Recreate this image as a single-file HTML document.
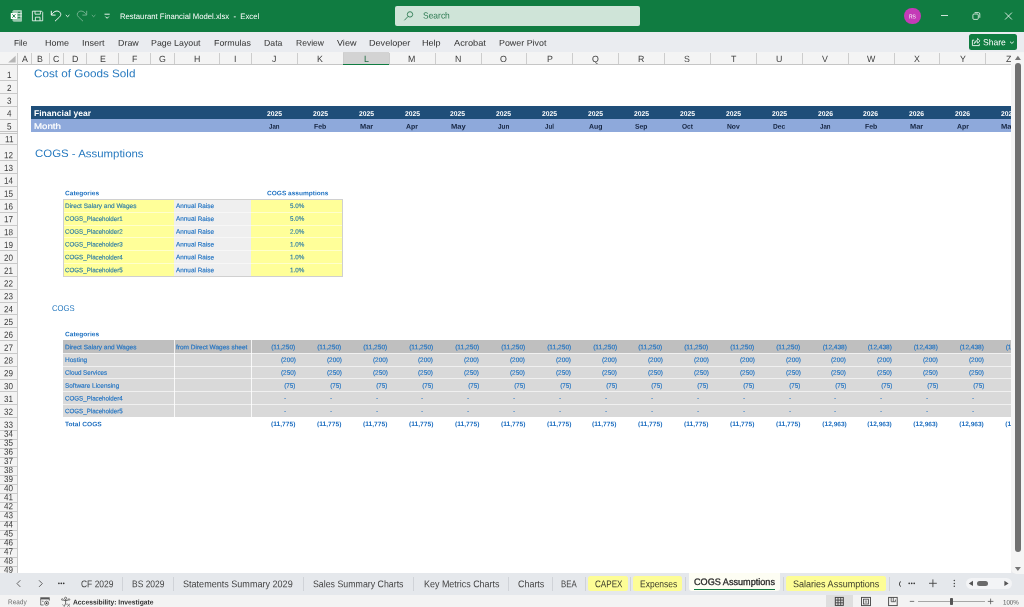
<!DOCTYPE html>
<html><head><meta charset="utf-8"><title>Restaurant Financial Model.xlsx - Excel</title>
<style>
html,body{margin:0;padding:0}
body{width:1024px;height:607px;position:relative;overflow:hidden;background:#fff;font-family:"Liberation Sans",sans-serif}
#r{position:absolute;left:0;top:0;width:1024px;height:607px;overflow:hidden;will-change:transform}
#r div{position:absolute}
#r svg{position:absolute;overflow:visible}
.t{position:absolute;white-space:pre;line-height:1;display:block}
</style></head><body><div id="r">
<div style="left:0.00px;top:0.00px;width:1024.00px;height:32.00px;background:#107c41;"></div>
<div style="left:395.00px;top:5.70px;width:244.90px;height:20.50px;background:#cfe4d8;border-radius:2px;"></div>
<span class="t" style="top:10px;line-height:10px;font-size:8.9px;color:#2d7a52;left:422.70px;transform-origin:0 50%;transform:translateY(0.60px) skewY(0.05deg) scaleX(0.9540);">Search</span>
<span class="t" style="top:12px;line-height:9px;font-size:7.9px;color:#ffffff;left:120.30px;transform-origin:0 50%;transform:translateY(0.00px) skewY(0.05deg) scaleX(0.9763);">Restaurant Financial Model.xlsx  -  Excel</span>
<div style="left:904.4px;top:7.9px;width:16.2px;height:16.2px;border-radius:50%;background:#c43bb7"></div>
<span class="t" style="top:13px;line-height:6px;font-size:5.8px;color:#ffffff;left:909.10px;transform-origin:0 50%;transform:translateY(0.50px) skewY(0.05deg) scaleX(0.8563);">RS</span>
<div style="left:0.00px;top:32.00px;width:1024.00px;height:20.00px;background:#eaecf0;"></div>
<span class="t" style="top:37px;line-height:10px;font-size:8.4px;color:#303030;left:14.00px;transform-origin:0 50%;transform:translateY(0.75px) skewY(0.05deg) scaleX(0.9827);">File</span>
<span class="t" style="top:37px;line-height:10px;font-size:8.4px;color:#303030;left:45.00px;transform-origin:0 50%;transform:translateY(0.75px) skewY(0.05deg) scaleX(1.0712);">Home</span>
<span class="t" style="top:37px;line-height:10px;font-size:8.4px;color:#303030;left:82.30px;transform-origin:0 50%;transform:translateY(0.75px) skewY(0.05deg) scaleX(1.0806);">Insert</span>
<span class="t" style="top:37px;line-height:10px;font-size:8.4px;color:#303030;left:117.50px;transform-origin:0 50%;transform:translateY(0.75px) skewY(0.05deg) scaleX(1.0612);">Draw</span>
<span class="t" style="top:37px;line-height:10px;font-size:8.4px;color:#303030;left:151.30px;transform-origin:0 50%;transform:translateY(0.75px) skewY(0.05deg) scaleX(1.0537);">Page Layout</span>
<span class="t" style="top:37px;line-height:10px;font-size:8.4px;color:#303030;left:214.00px;transform-origin:0 50%;transform:translateY(0.75px) skewY(0.05deg) scaleX(1.0570);">Formulas</span>
<span class="t" style="top:37px;line-height:10px;font-size:8.4px;color:#303030;left:263.50px;transform-origin:0 50%;transform:translateY(0.75px) skewY(0.05deg) scaleX(1.0427);">Data</span>
<span class="t" style="top:37px;line-height:10px;font-size:8.4px;color:#303030;left:295.50px;transform-origin:0 50%;transform:translateY(0.75px) skewY(0.05deg) scaleX(1.0166);">Review</span>
<span class="t" style="top:37px;line-height:10px;font-size:8.4px;color:#303030;left:336.50px;transform-origin:0 50%;transform:translateY(0.75px) skewY(0.05deg) scaleX(1.0800);">View</span>
<span class="t" style="top:37px;line-height:10px;font-size:8.4px;color:#303030;left:368.50px;transform-origin:0 50%;transform:translateY(0.75px) skewY(0.05deg) scaleX(1.0840);">Developer</span>
<span class="t" style="top:37px;line-height:10px;font-size:8.4px;color:#303030;left:422.30px;transform-origin:0 50%;transform:translateY(0.75px) skewY(0.05deg) scaleX(1.0825);">Help</span>
<span class="t" style="top:37px;line-height:10px;font-size:8.4px;color:#303030;left:454.00px;transform-origin:0 50%;transform:translateY(0.75px) skewY(0.05deg) scaleX(1.1055);">Acrobat</span>
<span class="t" style="top:37px;line-height:10px;font-size:8.4px;color:#303030;left:499.00px;transform-origin:0 50%;transform:translateY(0.75px) skewY(0.05deg) scaleX(1.0599);">Power Pivot</span>
<div style="left:969.00px;top:34.00px;width:47.80px;height:16.00px;background:#107c41;border-radius:2.5px;"></div>
<span class="t" style="top:37px;line-height:10px;font-size:8.8px;color:#ffffff;left:983.00px;transform-origin:0 50%;transform:translateY(0.20px) skewY(0.05deg) scaleX(0.9753);">Share</span>
<div style="left:0.00px;top:51.90px;width:1024.00px;height:12.70px;background:#f4f4f4;"></div>
<div style="left:0.00px;top:64.00px;width:1010.90px;height:0.80px;background:#c6c6c6;"></div>
<div style="left:343.23px;top:52.40px;width:45.89px;height:11.60px;background:#d3d3d3;"></div>
<div style="left:343.23px;top:63.60px;width:45.89px;height:1.40px;background:#107c41;"></div>
<div style="left:31.10px;top:52.60px;width:0.80px;height:11.60px;background:#cdcdcd;"></div>
<span class="t" style="top:53px;line-height:10px;font-size:9.0px;color:#3d3d3d;left:21.56px;transform-origin:0 50%;transform:translateY(0.90px) skewY(0.05deg) scaleX(0.9800);">A</span>
<div style="left:48.70px;top:52.60px;width:0.80px;height:11.60px;background:#cdcdcd;"></div>
<span class="t" style="top:53px;line-height:10px;font-size:9.0px;color:#3d3d3d;left:37.36px;transform-origin:0 50%;transform:translateY(0.90px) skewY(0.05deg) scaleX(0.9800);">B</span>
<div style="left:63.00px;top:52.60px;width:0.80px;height:11.60px;background:#cdcdcd;"></div>
<span class="t" style="top:53px;line-height:10px;font-size:9.0px;color:#3d3d3d;left:53.07px;transform-origin:0 50%;transform:translateY(0.90px) skewY(0.05deg) scaleX(0.9800);">C</span>
<div style="left:86.00px;top:52.60px;width:0.80px;height:11.60px;background:#cdcdcd;"></div>
<span class="t" style="top:53px;line-height:10px;font-size:9.0px;color:#3d3d3d;left:71.72px;transform-origin:0 50%;transform:translateY(0.90px) skewY(0.05deg) scaleX(0.9800);">D</span>
<div style="left:118.30px;top:52.60px;width:0.80px;height:11.60px;background:#cdcdcd;"></div>
<span class="t" style="top:53px;line-height:10px;font-size:9.0px;color:#3d3d3d;left:99.61px;transform-origin:0 50%;transform:translateY(0.90px) skewY(0.05deg) scaleX(0.9800);">E</span>
<div style="left:150.10px;top:52.60px;width:0.80px;height:11.60px;background:#cdcdcd;"></div>
<span class="t" style="top:53px;line-height:10px;font-size:9.0px;color:#3d3d3d;left:131.91px;transform-origin:0 50%;transform:translateY(0.90px) skewY(0.05deg) scaleX(0.9800);">F</span>
<div style="left:174.00px;top:52.60px;width:0.80px;height:11.60px;background:#cdcdcd;"></div>
<span class="t" style="top:53px;line-height:10px;font-size:9.0px;color:#3d3d3d;left:159.02px;transform-origin:0 50%;transform:translateY(0.90px) skewY(0.05deg) scaleX(0.9800);">G</span>
<div style="left:219.00px;top:52.60px;width:0.80px;height:11.60px;background:#cdcdcd;"></div>
<span class="t" style="top:53px;line-height:10px;font-size:9.0px;color:#3d3d3d;left:193.72px;transform-origin:0 50%;transform:translateY(0.90px) skewY(0.05deg) scaleX(0.9800);">H</span>
<div style="left:251.10px;top:52.60px;width:0.80px;height:11.60px;background:#cdcdcd;"></div>
<span class="t" style="top:53px;line-height:10px;font-size:9.0px;color:#3d3d3d;left:234.22px;transform-origin:0 50%;transform:translateY(0.90px) skewY(0.05deg) scaleX(0.9800);">I</span>
<div style="left:296.94px;top:52.60px;width:0.80px;height:11.60px;background:#cdcdcd;"></div>
<span class="t" style="top:53px;line-height:10px;font-size:9.0px;color:#3d3d3d;left:272.19px;transform-origin:0 50%;transform:translateY(0.90px) skewY(0.05deg) scaleX(0.9800);">J</span>
<div style="left:342.83px;top:52.60px;width:0.80px;height:11.60px;background:#cdcdcd;"></div>
<span class="t" style="top:53px;line-height:10px;font-size:9.0px;color:#3d3d3d;left:317.34px;transform-origin:0 50%;transform:translateY(0.90px) skewY(0.05deg) scaleX(0.9800);">K</span>
<div style="left:388.72px;top:52.60px;width:0.80px;height:11.60px;background:#cdcdcd;"></div>
<span class="t" style="top:53px;line-height:10px;font-size:9.0px;color:#1e6b41;left:363.72px;transform-origin:0 50%;transform:translateY(0.90px) skewY(0.05deg) scaleX(0.9800);">L</span>
<div style="left:434.61px;top:52.60px;width:0.80px;height:11.60px;background:#cdcdcd;"></div>
<span class="t" style="top:53px;line-height:10px;font-size:9.0px;color:#3d3d3d;left:408.39px;transform-origin:0 50%;transform:translateY(0.90px) skewY(0.05deg) scaleX(0.9800);">M</span>
<div style="left:480.50px;top:52.60px;width:0.80px;height:11.60px;background:#cdcdcd;"></div>
<span class="t" style="top:53px;line-height:10px;font-size:9.0px;color:#3d3d3d;left:454.77px;transform-origin:0 50%;transform:translateY(0.90px) skewY(0.05deg) scaleX(0.9800);">N</span>
<div style="left:526.39px;top:52.60px;width:0.80px;height:11.60px;background:#cdcdcd;"></div>
<span class="t" style="top:53px;line-height:10px;font-size:9.0px;color:#3d3d3d;left:500.41px;transform-origin:0 50%;transform:translateY(0.90px) skewY(0.05deg) scaleX(0.9800);">O</span>
<div style="left:572.28px;top:52.60px;width:0.80px;height:11.60px;background:#cdcdcd;"></div>
<span class="t" style="top:53px;line-height:10px;font-size:9.0px;color:#3d3d3d;left:546.79px;transform-origin:0 50%;transform:translateY(0.90px) skewY(0.05deg) scaleX(0.9800);">P</span>
<div style="left:618.17px;top:52.60px;width:0.80px;height:11.60px;background:#cdcdcd;"></div>
<span class="t" style="top:53px;line-height:10px;font-size:9.0px;color:#3d3d3d;left:592.19px;transform-origin:0 50%;transform:translateY(0.90px) skewY(0.05deg) scaleX(0.9800);">Q</span>
<div style="left:664.06px;top:52.60px;width:0.80px;height:11.60px;background:#cdcdcd;"></div>
<span class="t" style="top:53px;line-height:10px;font-size:9.0px;color:#3d3d3d;left:638.33px;transform-origin:0 50%;transform:translateY(0.90px) skewY(0.05deg) scaleX(0.9800);">R</span>
<div style="left:709.95px;top:52.60px;width:0.80px;height:11.60px;background:#cdcdcd;"></div>
<span class="t" style="top:53px;line-height:10px;font-size:9.0px;color:#3d3d3d;left:684.46px;transform-origin:0 50%;transform:translateY(0.90px) skewY(0.05deg) scaleX(0.9800);">S</span>
<div style="left:755.84px;top:52.60px;width:0.80px;height:11.60px;background:#cdcdcd;"></div>
<span class="t" style="top:53px;line-height:10px;font-size:9.0px;color:#3d3d3d;left:730.60px;transform-origin:0 50%;transform:translateY(0.90px) skewY(0.05deg) scaleX(0.9800);">T</span>
<div style="left:801.73px;top:52.60px;width:0.80px;height:11.60px;background:#cdcdcd;"></div>
<span class="t" style="top:53px;line-height:10px;font-size:9.0px;color:#3d3d3d;left:776.00px;transform-origin:0 50%;transform:translateY(0.90px) skewY(0.05deg) scaleX(0.9800);">U</span>
<div style="left:847.62px;top:52.60px;width:0.80px;height:11.60px;background:#cdcdcd;"></div>
<span class="t" style="top:53px;line-height:10px;font-size:9.0px;color:#3d3d3d;left:822.13px;transform-origin:0 50%;transform:translateY(0.90px) skewY(0.05deg) scaleX(0.9800);">V</span>
<div style="left:893.51px;top:52.60px;width:0.80px;height:11.60px;background:#cdcdcd;"></div>
<span class="t" style="top:53px;line-height:10px;font-size:9.0px;color:#3d3d3d;left:866.80px;transform-origin:0 50%;transform:translateY(0.90px) skewY(0.05deg) scaleX(0.9800);">W</span>
<div style="left:939.40px;top:52.60px;width:0.80px;height:11.60px;background:#cdcdcd;"></div>
<span class="t" style="top:53px;line-height:10px;font-size:9.0px;color:#3d3d3d;left:913.91px;transform-origin:0 50%;transform:translateY(0.90px) skewY(0.05deg) scaleX(0.9800);">X</span>
<div style="left:985.29px;top:52.60px;width:0.80px;height:11.60px;background:#cdcdcd;"></div>
<span class="t" style="top:53px;line-height:10px;font-size:9.0px;color:#3d3d3d;left:959.80px;transform-origin:0 50%;transform:translateY(0.90px) skewY(0.05deg) scaleX(0.9800);">Y</span>
<span class="t" style="top:53px;line-height:10px;font-size:9.0px;color:#3d3d3d;left:1005.51px;transform-origin:0 50%;transform:translateY(0.90px) skewY(0.05deg) scaleX(0.9800);">Z</span>
<div style="left:17.10px;top:52.60px;width:0.80px;height:11.60px;background:#cdcdcd;"></div>
<svg style="left:0;top:52px" width="18" height="13" viewBox="0 0 18 13"><path d="M15.6 3.8 L15.6 10.6 L8.2 10.6 Z" fill="#b5b5b5"/></svg>
<div style="left:0.00px;top:64.80px;width:17.50px;height:508.00px;background:#f3f3f3;"></div>
<div style="left:17.10px;top:64.80px;width:0.80px;height:508.00px;background:#c9c9c9;"></div>
<div style="left:0.00px;top:80.26px;width:17.50px;height:0.80px;background:#c9c9c9;"></div>
<span class="t" style="top:70px;line-height:10px;font-size:9.0px;color:#3a3a3a;left:6.60px;transform-origin:0 50%;transform:translateY(0.06px) skewY(0.05deg) scaleX(0.9000);">1</span>
<div style="left:0.00px;top:93.09px;width:17.50px;height:0.80px;background:#c9c9c9;"></div>
<span class="t" style="top:82px;line-height:10px;font-size:9.0px;color:#3a3a3a;left:6.60px;transform-origin:0 50%;transform:translateY(0.89px) skewY(0.05deg) scaleX(0.9000);">2</span>
<div style="left:0.00px;top:105.92px;width:17.50px;height:0.80px;background:#c9c9c9;"></div>
<span class="t" style="top:95px;line-height:10px;font-size:9.0px;color:#3a3a3a;left:6.60px;transform-origin:0 50%;transform:translateY(0.72px) skewY(0.05deg) scaleX(0.9000);">3</span>
<div style="left:0.00px;top:118.75px;width:17.50px;height:0.80px;background:#c9c9c9;"></div>
<span class="t" style="top:108px;line-height:10px;font-size:9.0px;color:#3a3a3a;left:6.60px;transform-origin:0 50%;transform:translateY(0.55px) skewY(0.05deg) scaleX(0.9000);">4</span>
<span class="t" style="top:121px;line-height:10px;font-size:9.0px;color:#3a3a3a;left:6.60px;transform-origin:0 50%;transform:translateY(0.38px) skewY(0.05deg) scaleX(0.9000);">5</span>
<div style="left:0.00px;top:144.41px;width:17.50px;height:0.80px;background:#c9c9c9;"></div>
<span class="t" style="top:134px;line-height:10px;font-size:9.0px;color:#3a3a3a;left:4.65px;transform-origin:0 50%;transform:translateY(0.21px) skewY(0.05deg) scaleX(0.9000);">11</span>
<div style="left:0.00px;top:160.41px;width:17.50px;height:0.80px;background:#c9c9c9;"></div>
<span class="t" style="top:150px;line-height:10px;font-size:9.0px;color:#3a3a3a;left:4.35px;transform-origin:0 50%;transform:translateY(0.21px) skewY(0.05deg) scaleX(0.9000);">12</span>
<div style="left:0.00px;top:173.24px;width:17.50px;height:0.80px;background:#c9c9c9;"></div>
<span class="t" style="top:163px;line-height:10px;font-size:9.0px;color:#3a3a3a;left:4.35px;transform-origin:0 50%;transform:translateY(0.04px) skewY(0.05deg) scaleX(0.9000);">13</span>
<div style="left:0.00px;top:186.07px;width:17.50px;height:0.80px;background:#c9c9c9;"></div>
<span class="t" style="top:175px;line-height:10px;font-size:9.0px;color:#3a3a3a;left:4.35px;transform-origin:0 50%;transform:translateY(0.87px) skewY(0.05deg) scaleX(0.9000);">14</span>
<div style="left:0.00px;top:198.90px;width:17.50px;height:0.80px;background:#c9c9c9;"></div>
<span class="t" style="top:188px;line-height:10px;font-size:9.0px;color:#3a3a3a;left:4.35px;transform-origin:0 50%;transform:translateY(0.70px) skewY(0.05deg) scaleX(0.9000);">15</span>
<div style="left:0.00px;top:211.73px;width:17.50px;height:0.80px;background:#c9c9c9;"></div>
<span class="t" style="top:201px;line-height:10px;font-size:9.0px;color:#3a3a3a;left:4.35px;transform-origin:0 50%;transform:translateY(0.53px) skewY(0.05deg) scaleX(0.9000);">16</span>
<div style="left:0.00px;top:224.56px;width:17.50px;height:0.80px;background:#c9c9c9;"></div>
<span class="t" style="top:214px;line-height:10px;font-size:9.0px;color:#3a3a3a;left:4.35px;transform-origin:0 50%;transform:translateY(0.36px) skewY(0.05deg) scaleX(0.9000);">17</span>
<div style="left:0.00px;top:237.39px;width:17.50px;height:0.80px;background:#c9c9c9;"></div>
<span class="t" style="top:227px;line-height:10px;font-size:9.0px;color:#3a3a3a;left:4.35px;transform-origin:0 50%;transform:translateY(0.19px) skewY(0.05deg) scaleX(0.9000);">18</span>
<div style="left:0.00px;top:250.22px;width:17.50px;height:0.80px;background:#c9c9c9;"></div>
<span class="t" style="top:240px;line-height:10px;font-size:9.0px;color:#3a3a3a;left:4.35px;transform-origin:0 50%;transform:translateY(0.02px) skewY(0.05deg) scaleX(0.9000);">19</span>
<div style="left:0.00px;top:263.05px;width:17.50px;height:0.80px;background:#c9c9c9;"></div>
<span class="t" style="top:252px;line-height:10px;font-size:9.0px;color:#3a3a3a;left:4.35px;transform-origin:0 50%;transform:translateY(0.85px) skewY(0.05deg) scaleX(0.9000);">20</span>
<div style="left:0.00px;top:275.88px;width:17.50px;height:0.80px;background:#c9c9c9;"></div>
<span class="t" style="top:265px;line-height:10px;font-size:9.0px;color:#3a3a3a;left:4.35px;transform-origin:0 50%;transform:translateY(0.68px) skewY(0.05deg) scaleX(0.9000);">21</span>
<div style="left:0.00px;top:288.71px;width:17.50px;height:0.80px;background:#c9c9c9;"></div>
<span class="t" style="top:278px;line-height:10px;font-size:9.0px;color:#3a3a3a;left:4.35px;transform-origin:0 50%;transform:translateY(0.51px) skewY(0.05deg) scaleX(0.9000);">22</span>
<div style="left:0.00px;top:301.54px;width:17.50px;height:0.80px;background:#c9c9c9;"></div>
<span class="t" style="top:291px;line-height:10px;font-size:9.0px;color:#3a3a3a;left:4.35px;transform-origin:0 50%;transform:translateY(0.34px) skewY(0.05deg) scaleX(0.9000);">23</span>
<div style="left:0.00px;top:314.37px;width:17.50px;height:0.80px;background:#c9c9c9;"></div>
<span class="t" style="top:304px;line-height:10px;font-size:9.0px;color:#3a3a3a;left:4.35px;transform-origin:0 50%;transform:translateY(0.17px) skewY(0.05deg) scaleX(0.9000);">24</span>
<div style="left:0.00px;top:327.20px;width:17.50px;height:0.80px;background:#c9c9c9;"></div>
<span class="t" style="top:317px;line-height:10px;font-size:9.0px;color:#3a3a3a;left:4.35px;transform-origin:0 50%;transform:translateY(0.00px) skewY(0.05deg) scaleX(0.9000);">25</span>
<div style="left:0.00px;top:340.03px;width:17.50px;height:0.80px;background:#c9c9c9;"></div>
<span class="t" style="top:329px;line-height:10px;font-size:9.0px;color:#3a3a3a;left:4.35px;transform-origin:0 50%;transform:translateY(0.83px) skewY(0.05deg) scaleX(0.9000);">26</span>
<div style="left:0.00px;top:352.86px;width:17.50px;height:0.80px;background:#c9c9c9;"></div>
<span class="t" style="top:342px;line-height:10px;font-size:9.0px;color:#3a3a3a;left:4.35px;transform-origin:0 50%;transform:translateY(0.66px) skewY(0.05deg) scaleX(0.9000);">27</span>
<div style="left:0.00px;top:365.69px;width:17.50px;height:0.80px;background:#c9c9c9;"></div>
<span class="t" style="top:355px;line-height:10px;font-size:9.0px;color:#3a3a3a;left:4.35px;transform-origin:0 50%;transform:translateY(0.49px) skewY(0.05deg) scaleX(0.9000);">28</span>
<div style="left:0.00px;top:378.52px;width:17.50px;height:0.80px;background:#c9c9c9;"></div>
<span class="t" style="top:368px;line-height:10px;font-size:9.0px;color:#3a3a3a;left:4.35px;transform-origin:0 50%;transform:translateY(0.32px) skewY(0.05deg) scaleX(0.9000);">29</span>
<div style="left:0.00px;top:391.35px;width:17.50px;height:0.80px;background:#c9c9c9;"></div>
<span class="t" style="top:381px;line-height:10px;font-size:9.0px;color:#3a3a3a;left:4.35px;transform-origin:0 50%;transform:translateY(0.15px) skewY(0.05deg) scaleX(0.9000);">30</span>
<div style="left:0.00px;top:404.18px;width:17.50px;height:0.80px;background:#c9c9c9;"></div>
<span class="t" style="top:393px;line-height:10px;font-size:9.0px;color:#3a3a3a;left:4.35px;transform-origin:0 50%;transform:translateY(0.98px) skewY(0.05deg) scaleX(0.9000);">31</span>
<div style="left:0.00px;top:417.01px;width:17.50px;height:0.80px;background:#c9c9c9;"></div>
<span class="t" style="top:406px;line-height:10px;font-size:9.0px;color:#3a3a3a;left:4.35px;transform-origin:0 50%;transform:translateY(0.81px) skewY(0.05deg) scaleX(0.9000);">32</span>
<div style="left:0.00px;top:429.84px;width:17.50px;height:0.80px;background:#c9c9c9;"></div>
<span class="t" style="top:419px;line-height:10px;font-size:9.0px;color:#3a3a3a;left:4.35px;transform-origin:0 50%;transform:translateY(0.64px) skewY(0.05deg) scaleX(0.9000);">33</span>
<div style="left:0.00px;top:438.91px;width:17.50px;height:0.80px;background:#c9c9c9;"></div>
<span class="t" style="top:428px;line-height:10px;font-size:9.0px;color:#3a3a3a;left:4.35px;transform-origin:0 50%;transform:translateY(0.71px) skewY(0.05deg) scaleX(0.9000);">34</span>
<div style="left:0.00px;top:447.98px;width:17.50px;height:0.80px;background:#c9c9c9;"></div>
<span class="t" style="top:437px;line-height:10px;font-size:9.0px;color:#3a3a3a;left:4.35px;transform-origin:0 50%;transform:translateY(0.78px) skewY(0.05deg) scaleX(0.9000);">35</span>
<div style="left:0.00px;top:457.05px;width:17.50px;height:0.80px;background:#c9c9c9;"></div>
<span class="t" style="top:446px;line-height:10px;font-size:9.0px;color:#3a3a3a;left:4.35px;transform-origin:0 50%;transform:translateY(0.85px) skewY(0.05deg) scaleX(0.9000);">36</span>
<div style="left:0.00px;top:466.12px;width:17.50px;height:0.80px;background:#c9c9c9;"></div>
<span class="t" style="top:455px;line-height:10px;font-size:9.0px;color:#3a3a3a;left:4.35px;transform-origin:0 50%;transform:translateY(0.92px) skewY(0.05deg) scaleX(0.9000);">37</span>
<div style="left:0.00px;top:475.19px;width:17.50px;height:0.80px;background:#c9c9c9;"></div>
<span class="t" style="top:464px;line-height:10px;font-size:9.0px;color:#3a3a3a;left:4.35px;transform-origin:0 50%;transform:translateY(0.99px) skewY(0.05deg) scaleX(0.9000);">38</span>
<div style="left:0.00px;top:484.26px;width:17.50px;height:0.80px;background:#c9c9c9;"></div>
<span class="t" style="top:474px;line-height:10px;font-size:9.0px;color:#3a3a3a;left:4.35px;transform-origin:0 50%;transform:translateY(0.06px) skewY(0.05deg) scaleX(0.9000);">39</span>
<div style="left:0.00px;top:493.33px;width:17.50px;height:0.80px;background:#c9c9c9;"></div>
<span class="t" style="top:483px;line-height:10px;font-size:9.0px;color:#3a3a3a;left:4.35px;transform-origin:0 50%;transform:translateY(0.13px) skewY(0.05deg) scaleX(0.9000);">40</span>
<div style="left:0.00px;top:502.40px;width:17.50px;height:0.80px;background:#c9c9c9;"></div>
<span class="t" style="top:492px;line-height:10px;font-size:9.0px;color:#3a3a3a;left:4.35px;transform-origin:0 50%;transform:translateY(0.20px) skewY(0.05deg) scaleX(0.9000);">41</span>
<div style="left:0.00px;top:511.47px;width:17.50px;height:0.80px;background:#c9c9c9;"></div>
<span class="t" style="top:501px;line-height:10px;font-size:9.0px;color:#3a3a3a;left:4.35px;transform-origin:0 50%;transform:translateY(0.27px) skewY(0.05deg) scaleX(0.9000);">42</span>
<div style="left:0.00px;top:520.54px;width:17.50px;height:0.80px;background:#c9c9c9;"></div>
<span class="t" style="top:510px;line-height:10px;font-size:9.0px;color:#3a3a3a;left:4.35px;transform-origin:0 50%;transform:translateY(0.34px) skewY(0.05deg) scaleX(0.9000);">43</span>
<div style="left:0.00px;top:529.61px;width:17.50px;height:0.80px;background:#c9c9c9;"></div>
<span class="t" style="top:519px;line-height:10px;font-size:9.0px;color:#3a3a3a;left:4.35px;transform-origin:0 50%;transform:translateY(0.41px) skewY(0.05deg) scaleX(0.9000);">44</span>
<div style="left:0.00px;top:538.68px;width:17.50px;height:0.80px;background:#c9c9c9;"></div>
<span class="t" style="top:528px;line-height:10px;font-size:9.0px;color:#3a3a3a;left:4.35px;transform-origin:0 50%;transform:translateY(0.48px) skewY(0.05deg) scaleX(0.9000);">45</span>
<div style="left:0.00px;top:547.75px;width:17.50px;height:0.80px;background:#c9c9c9;"></div>
<span class="t" style="top:537px;line-height:10px;font-size:9.0px;color:#3a3a3a;left:4.35px;transform-origin:0 50%;transform:translateY(0.55px) skewY(0.05deg) scaleX(0.9000);">46</span>
<div style="left:0.00px;top:556.82px;width:17.50px;height:0.80px;background:#c9c9c9;"></div>
<span class="t" style="top:546px;line-height:10px;font-size:9.0px;color:#3a3a3a;left:4.35px;transform-origin:0 50%;transform:translateY(0.62px) skewY(0.05deg) scaleX(0.9000);">47</span>
<div style="left:0.00px;top:565.89px;width:17.50px;height:0.80px;background:#c9c9c9;"></div>
<span class="t" style="top:555px;line-height:10px;font-size:9.0px;color:#3a3a3a;left:4.35px;transform-origin:0 50%;transform:translateY(0.69px) skewY(0.05deg) scaleX(0.9000);">48</span>
<span class="t" style="top:564px;line-height:10px;font-size:9.0px;color:#3a3a3a;left:4.35px;transform-origin:0 50%;transform:translateY(0.76px) skewY(0.05deg) scaleX(0.9000);">49</span>
<div style="left:0.00px;top:131.00px;width:17.50px;height:0.80px;background:#c2c2c2;"></div>
<div style="left:0.00px;top:133.10px;width:17.50px;height:0.80px;background:#c6c6c6;"></div>
<span class="t" style="top:67px;line-height:12px;font-size:11.1px;color:#2679bf;left:34.30px;transform-origin:0 50%;transform:translateY(0.25px) skewY(0.05deg) scaleX(1.0546);">Cost of Goods Sold</span>
<span class="t" style="top:147px;line-height:12px;font-size:10.8px;color:#2679bf;left:34.60px;transform-origin:0 50%;transform:translateY(0.10px) skewY(0.05deg) scaleX(1.0582);">COGS - Assumptions</span>
<span class="t" style="top:303px;line-height:10px;font-size:8.3px;color:#2679bf;left:51.70px;transform-origin:0 50%;transform:translateY(0.00px) skewY(0.05deg) scaleX(0.9287);">COGS</span>
<div style="left:31.40px;top:118.15px;width:979.50px;height:14.03px;background:#8ea9db;"></div>
<div style="left:31.40px;top:106.32px;width:979.50px;height:12.63px;background:#1f4e79;"></div>
<span class="t" style="top:107px;line-height:10px;font-size:8.3px;color:#ffffff;font-weight:bold;left:34.30px;transform-origin:0 50%;transform:translateY(0.90px) skewY(0.05deg) scaleX(1.0297);">Financial year</span>
<span class="t" style="top:120px;line-height:10px;font-size:8.3px;color:#ffffff;left:34.30px;transform-origin:0 50%;transform:translateY(0.90px) skewY(0.05deg) scaleX(1.1662);-webkit-text-stroke:0.2px #fff;">Month</span>
<span class="t" style="top:110px;line-height:7px;font-size:7.0px;color:#ffffff;font-weight:bold;left:266.84px;transform-origin:0 50%;transform:translateY(0.00px) skewY(0.05deg) scaleX(0.9698);">2025</span>
<span class="t" style="top:122px;line-height:7px;font-size:7.0px;color:#14233f;font-weight:bold;left:269.14px;transform-origin:0 50%;transform:translateY(0.85px) skewY(0.05deg) scaleX(0.8706);">Jan</span>
<span class="t" style="top:110px;line-height:7px;font-size:7.0px;color:#ffffff;font-weight:bold;left:312.73px;transform-origin:0 50%;transform:translateY(0.00px) skewY(0.05deg) scaleX(0.9698);">2025</span>
<span class="t" style="top:122px;line-height:7px;font-size:7.0px;color:#14233f;font-weight:bold;left:314.13px;transform-origin:0 50%;transform:translateY(0.85px) skewY(0.05deg) scaleX(0.9885);">Feb</span>
<span class="t" style="top:110px;line-height:7px;font-size:7.0px;color:#ffffff;font-weight:bold;left:358.62px;transform-origin:0 50%;transform:translateY(0.00px) skewY(0.05deg) scaleX(0.9698);">2025</span>
<span class="t" style="top:122px;line-height:7px;font-size:7.0px;color:#14233f;font-weight:bold;left:359.57px;transform-origin:0 50%;transform:translateY(0.85px) skewY(0.05deg) scaleX(1.0604);">Mar</span>
<span class="t" style="top:110px;line-height:7px;font-size:7.0px;color:#ffffff;font-weight:bold;left:404.51px;transform-origin:0 50%;transform:translateY(0.00px) skewY(0.05deg) scaleX(0.9698);">2025</span>
<span class="t" style="top:122px;line-height:7px;font-size:7.0px;color:#14233f;font-weight:bold;left:406.12px;transform-origin:0 50%;transform:translateY(0.85px) skewY(0.05deg) scaleX(0.9871);">Apr</span>
<span class="t" style="top:110px;line-height:7px;font-size:7.0px;color:#ffffff;font-weight:bold;left:450.40px;transform-origin:0 50%;transform:translateY(0.00px) skewY(0.05deg) scaleX(0.9698);">2025</span>
<span class="t" style="top:122px;line-height:7px;font-size:7.0px;color:#14233f;font-weight:bold;left:450.56px;transform-origin:0 50%;transform:translateY(0.85px) skewY(0.05deg) scaleX(1.0869);">May</span>
<span class="t" style="top:110px;line-height:7px;font-size:7.0px;color:#ffffff;font-weight:bold;left:496.29px;transform-origin:0 50%;transform:translateY(0.00px) skewY(0.05deg) scaleX(0.9698);">2025</span>
<span class="t" style="top:122px;line-height:7px;font-size:7.0px;color:#14233f;font-weight:bold;left:498.14px;transform-origin:0 50%;transform:translateY(0.85px) skewY(0.05deg) scaleX(0.9161);">Jun</span>
<span class="t" style="top:110px;line-height:7px;font-size:7.0px;color:#ffffff;font-weight:bold;left:542.19px;transform-origin:0 50%;transform:translateY(0.00px) skewY(0.05deg) scaleX(0.9698);">2025</span>
<span class="t" style="top:122px;line-height:7px;font-size:7.0px;color:#14233f;font-weight:bold;left:545.28px;transform-origin:0 50%;transform:translateY(0.85px) skewY(0.05deg) scaleX(0.8801);">Jul</span>
<span class="t" style="top:110px;line-height:7px;font-size:7.0px;color:#ffffff;font-weight:bold;left:588.08px;transform-origin:0 50%;transform:translateY(0.00px) skewY(0.05deg) scaleX(0.9698);">2025</span>
<span class="t" style="top:122px;line-height:7px;font-size:7.0px;color:#14233f;font-weight:bold;left:588.88px;transform-origin:0 50%;transform:translateY(0.85px) skewY(0.05deg) scaleX(0.9922);">Aug</span>
<span class="t" style="top:110px;line-height:7px;font-size:7.0px;color:#ffffff;font-weight:bold;left:633.97px;transform-origin:0 50%;transform:translateY(0.00px) skewY(0.05deg) scaleX(0.9698);">2025</span>
<span class="t" style="top:122px;line-height:7px;font-size:7.0px;color:#14233f;font-weight:bold;left:635.31px;transform-origin:0 50%;transform:translateY(0.85px) skewY(0.05deg) scaleX(0.9659);">Sep</span>
<span class="t" style="top:110px;line-height:7px;font-size:7.0px;color:#ffffff;font-weight:bold;left:679.86px;transform-origin:0 50%;transform:translateY(0.00px) skewY(0.05deg) scaleX(0.9698);">2025</span>
<span class="t" style="top:122px;line-height:7px;font-size:7.0px;color:#14233f;font-weight:bold;left:681.95px;transform-origin:0 50%;transform:translateY(0.85px) skewY(0.05deg) scaleX(0.9342);">Oct</span>
<span class="t" style="top:110px;line-height:7px;font-size:7.0px;color:#ffffff;font-weight:bold;left:725.75px;transform-origin:0 50%;transform:translateY(0.00px) skewY(0.05deg) scaleX(0.9698);">2025</span>
<span class="t" style="top:122px;line-height:7px;font-size:7.0px;color:#14233f;font-weight:bold;left:726.94px;transform-origin:0 50%;transform:translateY(0.85px) skewY(0.05deg) scaleX(0.9604);">Nov</span>
<span class="t" style="top:110px;line-height:7px;font-size:7.0px;color:#ffffff;font-weight:bold;left:771.64px;transform-origin:0 50%;transform:translateY(0.00px) skewY(0.05deg) scaleX(0.9698);">2025</span>
<span class="t" style="top:122px;line-height:7px;font-size:7.0px;color:#14233f;font-weight:bold;left:773.09px;transform-origin:0 50%;transform:translateY(0.85px) skewY(0.05deg) scaleX(0.9501);">Dec</span>
<span class="t" style="top:110px;line-height:7px;font-size:7.0px;color:#ffffff;font-weight:bold;left:817.53px;transform-origin:0 50%;transform:translateY(0.00px) skewY(0.05deg) scaleX(0.9698);">2026</span>
<span class="t" style="top:122px;line-height:7px;font-size:7.0px;color:#14233f;font-weight:bold;left:819.83px;transform-origin:0 50%;transform:translateY(0.85px) skewY(0.05deg) scaleX(0.8706);">Jan</span>
<span class="t" style="top:110px;line-height:7px;font-size:7.0px;color:#ffffff;font-weight:bold;left:863.42px;transform-origin:0 50%;transform:translateY(0.00px) skewY(0.05deg) scaleX(0.9698);">2026</span>
<span class="t" style="top:122px;line-height:7px;font-size:7.0px;color:#14233f;font-weight:bold;left:864.82px;transform-origin:0 50%;transform:translateY(0.85px) skewY(0.05deg) scaleX(0.9885);">Feb</span>
<span class="t" style="top:110px;line-height:7px;font-size:7.0px;color:#ffffff;font-weight:bold;left:909.31px;transform-origin:0 50%;transform:translateY(0.00px) skewY(0.05deg) scaleX(0.9698);">2026</span>
<span class="t" style="top:122px;line-height:7px;font-size:7.0px;color:#14233f;font-weight:bold;left:910.25px;transform-origin:0 50%;transform:translateY(0.85px) skewY(0.05deg) scaleX(1.0604);">Mar</span>
<span class="t" style="top:110px;line-height:7px;font-size:7.0px;color:#ffffff;font-weight:bold;left:955.20px;transform-origin:0 50%;transform:translateY(0.00px) skewY(0.05deg) scaleX(0.9698);">2026</span>
<span class="t" style="top:122px;line-height:7px;font-size:7.0px;color:#14233f;font-weight:bold;left:956.79px;transform-origin:0 50%;transform:translateY(0.85px) skewY(0.05deg) scaleX(0.9871);">Apr</span>
<span class="t" style="top:110px;line-height:7px;font-size:7.0px;color:#ffffff;font-weight:bold;left:1001.09px;transform-origin:0 50%;transform:translateY(0.00px) skewY(0.05deg) scaleX(0.9698);">2026</span>
<span class="t" style="top:122px;line-height:7px;font-size:7.0px;color:#14233f;font-weight:bold;left:1001.24px;transform-origin:0 50%;transform:translateY(0.85px) skewY(0.05deg) scaleX(1.0869);">May</span>
<div style="left:63.40px;top:199.30px;width:111.00px;height:76.98px;background:#ffff99;"></div>
<div style="left:174.40px;top:199.30px;width:77.10px;height:76.98px;background:#efefef;"></div>
<div style="left:251.45px;top:199.30px;width:91.78px;height:76.98px;background:#ffff99;"></div>
<div style="left:63.40px;top:211.68px;width:279.83px;height:0.90px;background:rgba(255,255,255,0.5);"></div>
<div style="left:63.40px;top:224.51px;width:279.83px;height:0.90px;background:rgba(255,255,255,0.5);"></div>
<div style="left:63.40px;top:237.34px;width:279.83px;height:0.90px;background:rgba(255,255,255,0.5);"></div>
<div style="left:63.40px;top:250.17px;width:279.83px;height:0.90px;background:rgba(255,255,255,0.5);"></div>
<div style="left:63.40px;top:263.00px;width:279.83px;height:0.90px;background:rgba(255,255,255,0.5);"></div>
<div style="left:62.90px;top:198.80px;width:280.53px;height:77.88px;border:0.7px solid #d0d0d0;box-sizing:border-box"></div>
<span class="t" style="top:189px;line-height:7px;font-size:6.4px;color:#1f72c2;font-weight:bold;left:64.70px;transform-origin:0 50%;transform:translateY(0.20px) skewY(0.05deg) scaleX(1.0310);">Categories</span>
<span class="t" style="top:189px;line-height:7px;font-size:6.4px;color:#1f72c2;font-weight:bold;left:266.50px;transform-origin:0 50%;transform:translateY(0.20px) skewY(0.05deg) scaleX(1.0233);">COGS assumptions</span>
<span class="t" style="top:202px;line-height:7px;font-size:6.4px;color:#2f7ea6;left:64.70px;transform-origin:0 50%;transform:translateY(0.03px) skewY(0.05deg) scaleX(1.0136);-webkit-text-stroke:0.15px currentColor;">Direct Salary and Wages</span>
<span class="t" style="top:202px;line-height:7px;font-size:6.4px;color:#1f72c2;left:175.80px;transform-origin:0 50%;transform:translateY(0.03px) skewY(0.05deg) scaleX(0.9982);-webkit-text-stroke:0.15px currentColor;">Annual Raise</span>
<span class="t" style="top:202px;line-height:7px;font-size:6.4px;color:#2f7ea6;left:290.30px;transform-origin:0 50%;transform:translateY(0.03px) skewY(0.05deg) scaleX(0.9803);-webkit-text-stroke:0.15px currentColor;">5.0%</span>
<span class="t" style="top:214px;line-height:7px;font-size:6.4px;color:#2f7ea6;left:64.70px;transform-origin:0 50%;transform:translateY(0.86px) skewY(0.05deg) scaleX(0.9672);-webkit-text-stroke:0.15px currentColor;">COGS_Placeholder1</span>
<span class="t" style="top:214px;line-height:7px;font-size:6.4px;color:#1f72c2;left:175.80px;transform-origin:0 50%;transform:translateY(0.86px) skewY(0.05deg) scaleX(0.9982);-webkit-text-stroke:0.15px currentColor;">Annual Raise</span>
<span class="t" style="top:214px;line-height:7px;font-size:6.4px;color:#2f7ea6;left:290.30px;transform-origin:0 50%;transform:translateY(0.86px) skewY(0.05deg) scaleX(0.9803);-webkit-text-stroke:0.15px currentColor;">5.0%</span>
<span class="t" style="top:227px;line-height:7px;font-size:6.4px;color:#2f7ea6;left:64.70px;transform-origin:0 50%;transform:translateY(0.69px) skewY(0.05deg) scaleX(0.9672);-webkit-text-stroke:0.15px currentColor;">COGS_Placeholder2</span>
<span class="t" style="top:227px;line-height:7px;font-size:6.4px;color:#1f72c2;left:175.80px;transform-origin:0 50%;transform:translateY(0.69px) skewY(0.05deg) scaleX(0.9982);-webkit-text-stroke:0.15px currentColor;">Annual Raise</span>
<span class="t" style="top:227px;line-height:7px;font-size:6.4px;color:#2f7ea6;left:290.30px;transform-origin:0 50%;transform:translateY(0.69px) skewY(0.05deg) scaleX(0.9803);-webkit-text-stroke:0.15px currentColor;">2.0%</span>
<span class="t" style="top:240px;line-height:7px;font-size:6.4px;color:#2f7ea6;left:64.70px;transform-origin:0 50%;transform:translateY(0.52px) skewY(0.05deg) scaleX(0.9672);-webkit-text-stroke:0.15px currentColor;">COGS_Placeholder3</span>
<span class="t" style="top:240px;line-height:7px;font-size:6.4px;color:#1f72c2;left:175.80px;transform-origin:0 50%;transform:translateY(0.52px) skewY(0.05deg) scaleX(0.9982);-webkit-text-stroke:0.15px currentColor;">Annual Raise</span>
<span class="t" style="top:240px;line-height:7px;font-size:6.4px;color:#2f7ea6;left:290.30px;transform-origin:0 50%;transform:translateY(0.52px) skewY(0.05deg) scaleX(0.9803);-webkit-text-stroke:0.15px currentColor;">1.0%</span>
<span class="t" style="top:253px;line-height:7px;font-size:6.4px;color:#2f7ea6;left:64.70px;transform-origin:0 50%;transform:translateY(0.35px) skewY(0.05deg) scaleX(0.9672);-webkit-text-stroke:0.15px currentColor;">COGS_Placeholder4</span>
<span class="t" style="top:253px;line-height:7px;font-size:6.4px;color:#1f72c2;left:175.80px;transform-origin:0 50%;transform:translateY(0.35px) skewY(0.05deg) scaleX(0.9982);-webkit-text-stroke:0.15px currentColor;">Annual Raise</span>
<span class="t" style="top:253px;line-height:7px;font-size:6.4px;color:#2f7ea6;left:290.30px;transform-origin:0 50%;transform:translateY(0.35px) skewY(0.05deg) scaleX(0.9803);-webkit-text-stroke:0.15px currentColor;">1.0%</span>
<span class="t" style="top:266px;line-height:7px;font-size:6.4px;color:#2f7ea6;left:64.70px;transform-origin:0 50%;transform:translateY(0.18px) skewY(0.05deg) scaleX(0.9672);-webkit-text-stroke:0.15px currentColor;">COGS_Placeholder5</span>
<span class="t" style="top:266px;line-height:7px;font-size:6.4px;color:#1f72c2;left:175.80px;transform-origin:0 50%;transform:translateY(0.18px) skewY(0.05deg) scaleX(0.9982);-webkit-text-stroke:0.15px currentColor;">Annual Raise</span>
<span class="t" style="top:266px;line-height:7px;font-size:6.4px;color:#2f7ea6;left:290.30px;transform-origin:0 50%;transform:translateY(0.18px) skewY(0.05deg) scaleX(0.9803);-webkit-text-stroke:0.15px currentColor;">1.0%</span>
<div style="left:63.40px;top:340.43px;width:947.50px;height:12.83px;background:#bfbfbf;"></div>
<div style="left:63.40px;top:353.26px;width:947.50px;height:64.15px;background:#d9d9d9;"></div>
<div style="left:63.40px;top:352.76px;width:947.50px;height:1.00px;background:rgba(255,255,255,0.6);"></div>
<div style="left:63.40px;top:365.59px;width:947.50px;height:1.00px;background:rgba(255,255,255,0.6);"></div>
<div style="left:63.40px;top:378.42px;width:947.50px;height:1.00px;background:rgba(255,255,255,0.6);"></div>
<div style="left:63.40px;top:391.25px;width:947.50px;height:1.00px;background:rgba(255,255,255,0.6);"></div>
<div style="left:63.40px;top:404.08px;width:947.50px;height:1.00px;background:rgba(255,255,255,0.6);"></div>
<div style="left:173.90px;top:340.43px;width:1.00px;height:76.98px;background:rgba(255,255,255,0.8);"></div>
<div style="left:250.95px;top:340.43px;width:1.00px;height:76.98px;background:rgba(255,255,255,0.8);"></div>
<span class="t" style="top:330px;line-height:7px;font-size:6.4px;color:#1f72c2;font-weight:bold;left:64.90px;transform-origin:0 50%;transform:translateY(0.33px) skewY(0.05deg) scaleX(1.0310);">Categories</span>
<span class="t" style="top:343px;line-height:7px;font-size:6.4px;color:#1f72c2;left:64.90px;transform-origin:0 50%;transform:translateY(0.16px) skewY(0.05deg) scaleX(1.0136);-webkit-text-stroke:0.15px currentColor;">Direct Salary and Wages</span>
<span class="t" style="top:343px;line-height:7px;font-size:6.4px;color:#1f72c2;left:175.60px;transform-origin:0 50%;transform:translateY(0.16px) skewY(0.05deg) scaleX(1.0174);-webkit-text-stroke:0.15px currentColor;">from Direct Wages sheet</span>
<span class="t" style="top:343px;line-height:7px;font-size:6.4px;color:#1f72c2;right:728.36px;transform-origin:100% 50%;transform:translateY(0.16px) skewY(0.05deg) scaleX(1.0360);-webkit-text-stroke:0.15px currentColor;">(11,250)</span>
<span class="t" style="top:343px;line-height:7px;font-size:6.4px;color:#1f72c2;right:682.47px;transform-origin:100% 50%;transform:translateY(0.16px) skewY(0.05deg) scaleX(1.0360);-webkit-text-stroke:0.15px currentColor;">(11,250)</span>
<span class="t" style="top:343px;line-height:7px;font-size:6.4px;color:#1f72c2;right:636.58px;transform-origin:100% 50%;transform:translateY(0.16px) skewY(0.05deg) scaleX(1.0360);-webkit-text-stroke:0.15px currentColor;">(11,250)</span>
<span class="t" style="top:343px;line-height:7px;font-size:6.4px;color:#1f72c2;right:590.69px;transform-origin:100% 50%;transform:translateY(0.16px) skewY(0.05deg) scaleX(1.0360);-webkit-text-stroke:0.15px currentColor;">(11,250)</span>
<span class="t" style="top:343px;line-height:7px;font-size:6.4px;color:#1f72c2;right:544.80px;transform-origin:100% 50%;transform:translateY(0.16px) skewY(0.05deg) scaleX(1.0360);-webkit-text-stroke:0.15px currentColor;">(11,250)</span>
<span class="t" style="top:343px;line-height:7px;font-size:6.4px;color:#1f72c2;right:498.91px;transform-origin:100% 50%;transform:translateY(0.16px) skewY(0.05deg) scaleX(1.0360);-webkit-text-stroke:0.15px currentColor;">(11,250)</span>
<span class="t" style="top:343px;line-height:7px;font-size:6.4px;color:#1f72c2;right:453.02px;transform-origin:100% 50%;transform:translateY(0.16px) skewY(0.05deg) scaleX(1.0360);-webkit-text-stroke:0.15px currentColor;">(11,250)</span>
<span class="t" style="top:343px;line-height:7px;font-size:6.4px;color:#1f72c2;right:407.13px;transform-origin:100% 50%;transform:translateY(0.16px) skewY(0.05deg) scaleX(1.0360);-webkit-text-stroke:0.15px currentColor;">(11,250)</span>
<span class="t" style="top:343px;line-height:7px;font-size:6.4px;color:#1f72c2;right:361.24px;transform-origin:100% 50%;transform:translateY(0.16px) skewY(0.05deg) scaleX(1.0360);-webkit-text-stroke:0.15px currentColor;">(11,250)</span>
<span class="t" style="top:343px;line-height:7px;font-size:6.4px;color:#1f72c2;right:315.35px;transform-origin:100% 50%;transform:translateY(0.16px) skewY(0.05deg) scaleX(1.0360);-webkit-text-stroke:0.15px currentColor;">(11,250)</span>
<span class="t" style="top:343px;line-height:7px;font-size:6.4px;color:#1f72c2;right:269.46px;transform-origin:100% 50%;transform:translateY(0.16px) skewY(0.05deg) scaleX(1.0360);-webkit-text-stroke:0.15px currentColor;">(11,250)</span>
<span class="t" style="top:343px;line-height:7px;font-size:6.4px;color:#1f72c2;right:223.57px;transform-origin:100% 50%;transform:translateY(0.16px) skewY(0.05deg) scaleX(1.0360);-webkit-text-stroke:0.15px currentColor;">(11,250)</span>
<span class="t" style="top:343px;line-height:7px;font-size:6.4px;color:#1f72c2;right:177.68px;transform-origin:100% 50%;transform:translateY(0.16px) skewY(0.05deg) scaleX(1.0153);-webkit-text-stroke:0.15px currentColor;">(12,438)</span>
<span class="t" style="top:343px;line-height:7px;font-size:6.4px;color:#1f72c2;right:131.79px;transform-origin:100% 50%;transform:translateY(0.16px) skewY(0.05deg) scaleX(1.0153);-webkit-text-stroke:0.15px currentColor;">(12,438)</span>
<span class="t" style="top:343px;line-height:7px;font-size:6.4px;color:#1f72c2;right:85.90px;transform-origin:100% 50%;transform:translateY(0.16px) skewY(0.05deg) scaleX(1.0153);-webkit-text-stroke:0.15px currentColor;">(12,438)</span>
<span class="t" style="top:343px;line-height:7px;font-size:6.4px;color:#1f72c2;right:40.01px;transform-origin:100% 50%;transform:translateY(0.16px) skewY(0.05deg) scaleX(1.0153);-webkit-text-stroke:0.15px currentColor;">(12,438)</span>
<span class="t" style="top:343px;line-height:7px;font-size:6.4px;color:#1f72c2;right:-5.88px;transform-origin:100% 50%;transform:translateY(0.16px) skewY(0.05deg) scaleX(1.0153);-webkit-text-stroke:0.15px currentColor;">(12,438)</span>
<span class="t" style="top:355px;line-height:7px;font-size:6.4px;color:#1f72c2;left:64.90px;transform-origin:0 50%;transform:translateY(0.99px) skewY(0.05deg) scaleX(1.0231);-webkit-text-stroke:0.15px currentColor;">Hosting</span>
<span class="t" style="top:355px;line-height:7px;font-size:6.4px;color:#1f72c2;right:728.36px;transform-origin:100% 50%;transform:translateY(0.99px) skewY(0.05deg) scaleX(1.0041);-webkit-text-stroke:0.15px currentColor;">(200)</span>
<span class="t" style="top:355px;line-height:7px;font-size:6.4px;color:#1f72c2;right:682.47px;transform-origin:100% 50%;transform:translateY(0.99px) skewY(0.05deg) scaleX(1.0041);-webkit-text-stroke:0.15px currentColor;">(200)</span>
<span class="t" style="top:355px;line-height:7px;font-size:6.4px;color:#1f72c2;right:636.58px;transform-origin:100% 50%;transform:translateY(0.99px) skewY(0.05deg) scaleX(1.0041);-webkit-text-stroke:0.15px currentColor;">(200)</span>
<span class="t" style="top:355px;line-height:7px;font-size:6.4px;color:#1f72c2;right:590.69px;transform-origin:100% 50%;transform:translateY(0.99px) skewY(0.05deg) scaleX(1.0041);-webkit-text-stroke:0.15px currentColor;">(200)</span>
<span class="t" style="top:355px;line-height:7px;font-size:6.4px;color:#1f72c2;right:544.80px;transform-origin:100% 50%;transform:translateY(0.99px) skewY(0.05deg) scaleX(1.0041);-webkit-text-stroke:0.15px currentColor;">(200)</span>
<span class="t" style="top:355px;line-height:7px;font-size:6.4px;color:#1f72c2;right:498.91px;transform-origin:100% 50%;transform:translateY(0.99px) skewY(0.05deg) scaleX(1.0041);-webkit-text-stroke:0.15px currentColor;">(200)</span>
<span class="t" style="top:355px;line-height:7px;font-size:6.4px;color:#1f72c2;right:453.02px;transform-origin:100% 50%;transform:translateY(0.99px) skewY(0.05deg) scaleX(1.0041);-webkit-text-stroke:0.15px currentColor;">(200)</span>
<span class="t" style="top:355px;line-height:7px;font-size:6.4px;color:#1f72c2;right:407.13px;transform-origin:100% 50%;transform:translateY(0.99px) skewY(0.05deg) scaleX(1.0041);-webkit-text-stroke:0.15px currentColor;">(200)</span>
<span class="t" style="top:355px;line-height:7px;font-size:6.4px;color:#1f72c2;right:361.24px;transform-origin:100% 50%;transform:translateY(0.99px) skewY(0.05deg) scaleX(1.0041);-webkit-text-stroke:0.15px currentColor;">(200)</span>
<span class="t" style="top:355px;line-height:7px;font-size:6.4px;color:#1f72c2;right:315.35px;transform-origin:100% 50%;transform:translateY(0.99px) skewY(0.05deg) scaleX(1.0041);-webkit-text-stroke:0.15px currentColor;">(200)</span>
<span class="t" style="top:355px;line-height:7px;font-size:6.4px;color:#1f72c2;right:269.46px;transform-origin:100% 50%;transform:translateY(0.99px) skewY(0.05deg) scaleX(1.0041);-webkit-text-stroke:0.15px currentColor;">(200)</span>
<span class="t" style="top:355px;line-height:7px;font-size:6.4px;color:#1f72c2;right:223.57px;transform-origin:100% 50%;transform:translateY(0.99px) skewY(0.05deg) scaleX(1.0041);-webkit-text-stroke:0.15px currentColor;">(200)</span>
<span class="t" style="top:355px;line-height:7px;font-size:6.4px;color:#1f72c2;right:177.68px;transform-origin:100% 50%;transform:translateY(0.99px) skewY(0.05deg) scaleX(1.0041);-webkit-text-stroke:0.15px currentColor;">(200)</span>
<span class="t" style="top:355px;line-height:7px;font-size:6.4px;color:#1f72c2;right:131.79px;transform-origin:100% 50%;transform:translateY(0.99px) skewY(0.05deg) scaleX(1.0041);-webkit-text-stroke:0.15px currentColor;">(200)</span>
<span class="t" style="top:355px;line-height:7px;font-size:6.4px;color:#1f72c2;right:85.90px;transform-origin:100% 50%;transform:translateY(0.99px) skewY(0.05deg) scaleX(1.0041);-webkit-text-stroke:0.15px currentColor;">(200)</span>
<span class="t" style="top:355px;line-height:7px;font-size:6.4px;color:#1f72c2;right:40.01px;transform-origin:100% 50%;transform:translateY(0.99px) skewY(0.05deg) scaleX(1.0041);-webkit-text-stroke:0.15px currentColor;">(200)</span>
<span class="t" style="top:355px;line-height:7px;font-size:6.4px;color:#1f72c2;right:-5.88px;transform-origin:100% 50%;transform:translateY(0.99px) skewY(0.05deg) scaleX(1.0041);-webkit-text-stroke:0.15px currentColor;">(200)</span>
<span class="t" style="top:368px;line-height:7px;font-size:6.4px;color:#1f72c2;left:64.90px;transform-origin:0 50%;transform:translateY(0.82px) skewY(0.05deg) scaleX(0.9805);-webkit-text-stroke:0.15px currentColor;">Cloud Services</span>
<span class="t" style="top:368px;line-height:7px;font-size:6.4px;color:#1f72c2;right:728.36px;transform-origin:100% 50%;transform:translateY(0.82px) skewY(0.05deg) scaleX(1.0041);-webkit-text-stroke:0.15px currentColor;">(250)</span>
<span class="t" style="top:368px;line-height:7px;font-size:6.4px;color:#1f72c2;right:682.47px;transform-origin:100% 50%;transform:translateY(0.82px) skewY(0.05deg) scaleX(1.0041);-webkit-text-stroke:0.15px currentColor;">(250)</span>
<span class="t" style="top:368px;line-height:7px;font-size:6.4px;color:#1f72c2;right:636.58px;transform-origin:100% 50%;transform:translateY(0.82px) skewY(0.05deg) scaleX(1.0041);-webkit-text-stroke:0.15px currentColor;">(250)</span>
<span class="t" style="top:368px;line-height:7px;font-size:6.4px;color:#1f72c2;right:590.69px;transform-origin:100% 50%;transform:translateY(0.82px) skewY(0.05deg) scaleX(1.0041);-webkit-text-stroke:0.15px currentColor;">(250)</span>
<span class="t" style="top:368px;line-height:7px;font-size:6.4px;color:#1f72c2;right:544.80px;transform-origin:100% 50%;transform:translateY(0.82px) skewY(0.05deg) scaleX(1.0041);-webkit-text-stroke:0.15px currentColor;">(250)</span>
<span class="t" style="top:368px;line-height:7px;font-size:6.4px;color:#1f72c2;right:498.91px;transform-origin:100% 50%;transform:translateY(0.82px) skewY(0.05deg) scaleX(1.0041);-webkit-text-stroke:0.15px currentColor;">(250)</span>
<span class="t" style="top:368px;line-height:7px;font-size:6.4px;color:#1f72c2;right:453.02px;transform-origin:100% 50%;transform:translateY(0.82px) skewY(0.05deg) scaleX(1.0041);-webkit-text-stroke:0.15px currentColor;">(250)</span>
<span class="t" style="top:368px;line-height:7px;font-size:6.4px;color:#1f72c2;right:407.13px;transform-origin:100% 50%;transform:translateY(0.82px) skewY(0.05deg) scaleX(1.0041);-webkit-text-stroke:0.15px currentColor;">(250)</span>
<span class="t" style="top:368px;line-height:7px;font-size:6.4px;color:#1f72c2;right:361.24px;transform-origin:100% 50%;transform:translateY(0.82px) skewY(0.05deg) scaleX(1.0041);-webkit-text-stroke:0.15px currentColor;">(250)</span>
<span class="t" style="top:368px;line-height:7px;font-size:6.4px;color:#1f72c2;right:315.35px;transform-origin:100% 50%;transform:translateY(0.82px) skewY(0.05deg) scaleX(1.0041);-webkit-text-stroke:0.15px currentColor;">(250)</span>
<span class="t" style="top:368px;line-height:7px;font-size:6.4px;color:#1f72c2;right:269.46px;transform-origin:100% 50%;transform:translateY(0.82px) skewY(0.05deg) scaleX(1.0041);-webkit-text-stroke:0.15px currentColor;">(250)</span>
<span class="t" style="top:368px;line-height:7px;font-size:6.4px;color:#1f72c2;right:223.57px;transform-origin:100% 50%;transform:translateY(0.82px) skewY(0.05deg) scaleX(1.0041);-webkit-text-stroke:0.15px currentColor;">(250)</span>
<span class="t" style="top:368px;line-height:7px;font-size:6.4px;color:#1f72c2;right:177.68px;transform-origin:100% 50%;transform:translateY(0.82px) skewY(0.05deg) scaleX(1.0041);-webkit-text-stroke:0.15px currentColor;">(250)</span>
<span class="t" style="top:368px;line-height:7px;font-size:6.4px;color:#1f72c2;right:131.79px;transform-origin:100% 50%;transform:translateY(0.82px) skewY(0.05deg) scaleX(1.0041);-webkit-text-stroke:0.15px currentColor;">(250)</span>
<span class="t" style="top:368px;line-height:7px;font-size:6.4px;color:#1f72c2;right:85.90px;transform-origin:100% 50%;transform:translateY(0.82px) skewY(0.05deg) scaleX(1.0041);-webkit-text-stroke:0.15px currentColor;">(250)</span>
<span class="t" style="top:368px;line-height:7px;font-size:6.4px;color:#1f72c2;right:40.01px;transform-origin:100% 50%;transform:translateY(0.82px) skewY(0.05deg) scaleX(1.0041);-webkit-text-stroke:0.15px currentColor;">(250)</span>
<span class="t" style="top:368px;line-height:7px;font-size:6.4px;color:#1f72c2;right:-5.88px;transform-origin:100% 50%;transform:translateY(0.82px) skewY(0.05deg) scaleX(1.0041);-webkit-text-stroke:0.15px currentColor;">(250)</span>
<span class="t" style="top:381px;line-height:7px;font-size:6.4px;color:#1f72c2;left:64.90px;transform-origin:0 50%;transform:translateY(0.65px) skewY(0.05deg) scaleX(1.0042);-webkit-text-stroke:0.15px currentColor;">Software Licensing</span>
<span class="t" style="top:381px;line-height:7px;font-size:6.4px;color:#1f72c2;right:728.36px;transform-origin:100% 50%;transform:translateY(0.65px) skewY(0.05deg) scaleX(0.9842);-webkit-text-stroke:0.15px currentColor;">(75)</span>
<span class="t" style="top:381px;line-height:7px;font-size:6.4px;color:#1f72c2;right:682.47px;transform-origin:100% 50%;transform:translateY(0.65px) skewY(0.05deg) scaleX(0.9842);-webkit-text-stroke:0.15px currentColor;">(75)</span>
<span class="t" style="top:381px;line-height:7px;font-size:6.4px;color:#1f72c2;right:636.58px;transform-origin:100% 50%;transform:translateY(0.65px) skewY(0.05deg) scaleX(0.9842);-webkit-text-stroke:0.15px currentColor;">(75)</span>
<span class="t" style="top:381px;line-height:7px;font-size:6.4px;color:#1f72c2;right:590.69px;transform-origin:100% 50%;transform:translateY(0.65px) skewY(0.05deg) scaleX(0.9842);-webkit-text-stroke:0.15px currentColor;">(75)</span>
<span class="t" style="top:381px;line-height:7px;font-size:6.4px;color:#1f72c2;right:544.80px;transform-origin:100% 50%;transform:translateY(0.65px) skewY(0.05deg) scaleX(0.9842);-webkit-text-stroke:0.15px currentColor;">(75)</span>
<span class="t" style="top:381px;line-height:7px;font-size:6.4px;color:#1f72c2;right:498.91px;transform-origin:100% 50%;transform:translateY(0.65px) skewY(0.05deg) scaleX(0.9842);-webkit-text-stroke:0.15px currentColor;">(75)</span>
<span class="t" style="top:381px;line-height:7px;font-size:6.4px;color:#1f72c2;right:453.02px;transform-origin:100% 50%;transform:translateY(0.65px) skewY(0.05deg) scaleX(0.9842);-webkit-text-stroke:0.15px currentColor;">(75)</span>
<span class="t" style="top:381px;line-height:7px;font-size:6.4px;color:#1f72c2;right:407.13px;transform-origin:100% 50%;transform:translateY(0.65px) skewY(0.05deg) scaleX(0.9842);-webkit-text-stroke:0.15px currentColor;">(75)</span>
<span class="t" style="top:381px;line-height:7px;font-size:6.4px;color:#1f72c2;right:361.24px;transform-origin:100% 50%;transform:translateY(0.65px) skewY(0.05deg) scaleX(0.9842);-webkit-text-stroke:0.15px currentColor;">(75)</span>
<span class="t" style="top:381px;line-height:7px;font-size:6.4px;color:#1f72c2;right:315.35px;transform-origin:100% 50%;transform:translateY(0.65px) skewY(0.05deg) scaleX(0.9842);-webkit-text-stroke:0.15px currentColor;">(75)</span>
<span class="t" style="top:381px;line-height:7px;font-size:6.4px;color:#1f72c2;right:269.46px;transform-origin:100% 50%;transform:translateY(0.65px) skewY(0.05deg) scaleX(0.9842);-webkit-text-stroke:0.15px currentColor;">(75)</span>
<span class="t" style="top:381px;line-height:7px;font-size:6.4px;color:#1f72c2;right:223.57px;transform-origin:100% 50%;transform:translateY(0.65px) skewY(0.05deg) scaleX(0.9842);-webkit-text-stroke:0.15px currentColor;">(75)</span>
<span class="t" style="top:381px;line-height:7px;font-size:6.4px;color:#1f72c2;right:177.68px;transform-origin:100% 50%;transform:translateY(0.65px) skewY(0.05deg) scaleX(0.9842);-webkit-text-stroke:0.15px currentColor;">(75)</span>
<span class="t" style="top:381px;line-height:7px;font-size:6.4px;color:#1f72c2;right:131.79px;transform-origin:100% 50%;transform:translateY(0.65px) skewY(0.05deg) scaleX(0.9842);-webkit-text-stroke:0.15px currentColor;">(75)</span>
<span class="t" style="top:381px;line-height:7px;font-size:6.4px;color:#1f72c2;right:85.90px;transform-origin:100% 50%;transform:translateY(0.65px) skewY(0.05deg) scaleX(0.9842);-webkit-text-stroke:0.15px currentColor;">(75)</span>
<span class="t" style="top:381px;line-height:7px;font-size:6.4px;color:#1f72c2;right:40.01px;transform-origin:100% 50%;transform:translateY(0.65px) skewY(0.05deg) scaleX(0.9842);-webkit-text-stroke:0.15px currentColor;">(75)</span>
<span class="t" style="top:381px;line-height:7px;font-size:6.4px;color:#1f72c2;right:-5.88px;transform-origin:100% 50%;transform:translateY(0.65px) skewY(0.05deg) scaleX(0.9842);-webkit-text-stroke:0.15px currentColor;">(75)</span>
<span class="t" style="top:394px;line-height:7px;font-size:6.4px;color:#1f72c2;left:64.90px;transform-origin:0 50%;transform:translateY(0.48px) skewY(0.05deg) scaleX(0.9672);-webkit-text-stroke:0.15px currentColor;">COGS_Placeholder4</span>
<span class="t" style="top:394px;line-height:7px;font-size:6.4px;color:#1f72c2;left:283.74px;transform-origin:0 50%;transform:translateY(0.48px) skewY(0.05deg) scaleX(1.0324);-webkit-text-stroke:0.15px currentColor;">-</span>
<span class="t" style="top:394px;line-height:7px;font-size:6.4px;color:#1f72c2;left:329.63px;transform-origin:0 50%;transform:translateY(0.48px) skewY(0.05deg) scaleX(1.0324);-webkit-text-stroke:0.15px currentColor;">-</span>
<span class="t" style="top:394px;line-height:7px;font-size:6.4px;color:#1f72c2;left:375.52px;transform-origin:0 50%;transform:translateY(0.48px) skewY(0.05deg) scaleX(1.0324);-webkit-text-stroke:0.15px currentColor;">-</span>
<span class="t" style="top:394px;line-height:7px;font-size:6.4px;color:#1f72c2;left:421.41px;transform-origin:0 50%;transform:translateY(0.48px) skewY(0.05deg) scaleX(1.0324);-webkit-text-stroke:0.15px currentColor;">-</span>
<span class="t" style="top:394px;line-height:7px;font-size:6.4px;color:#1f72c2;left:467.30px;transform-origin:0 50%;transform:translateY(0.48px) skewY(0.05deg) scaleX(1.0324);-webkit-text-stroke:0.15px currentColor;">-</span>
<span class="t" style="top:394px;line-height:7px;font-size:6.4px;color:#1f72c2;left:513.19px;transform-origin:0 50%;transform:translateY(0.48px) skewY(0.05deg) scaleX(1.0324);-webkit-text-stroke:0.15px currentColor;">-</span>
<span class="t" style="top:394px;line-height:7px;font-size:6.4px;color:#1f72c2;left:559.08px;transform-origin:0 50%;transform:translateY(0.48px) skewY(0.05deg) scaleX(1.0324);-webkit-text-stroke:0.15px currentColor;">-</span>
<span class="t" style="top:394px;line-height:7px;font-size:6.4px;color:#1f72c2;left:604.97px;transform-origin:0 50%;transform:translateY(0.48px) skewY(0.05deg) scaleX(1.0324);-webkit-text-stroke:0.15px currentColor;">-</span>
<span class="t" style="top:394px;line-height:7px;font-size:6.4px;color:#1f72c2;left:650.86px;transform-origin:0 50%;transform:translateY(0.48px) skewY(0.05deg) scaleX(1.0324);-webkit-text-stroke:0.15px currentColor;">-</span>
<span class="t" style="top:394px;line-height:7px;font-size:6.4px;color:#1f72c2;left:696.75px;transform-origin:0 50%;transform:translateY(0.48px) skewY(0.05deg) scaleX(1.0324);-webkit-text-stroke:0.15px currentColor;">-</span>
<span class="t" style="top:394px;line-height:7px;font-size:6.4px;color:#1f72c2;left:742.64px;transform-origin:0 50%;transform:translateY(0.48px) skewY(0.05deg) scaleX(1.0324);-webkit-text-stroke:0.15px currentColor;">-</span>
<span class="t" style="top:394px;line-height:7px;font-size:6.4px;color:#1f72c2;left:788.53px;transform-origin:0 50%;transform:translateY(0.48px) skewY(0.05deg) scaleX(1.0324);-webkit-text-stroke:0.15px currentColor;">-</span>
<span class="t" style="top:394px;line-height:7px;font-size:6.4px;color:#1f72c2;left:834.42px;transform-origin:0 50%;transform:translateY(0.48px) skewY(0.05deg) scaleX(1.0324);-webkit-text-stroke:0.15px currentColor;">-</span>
<span class="t" style="top:394px;line-height:7px;font-size:6.4px;color:#1f72c2;left:880.31px;transform-origin:0 50%;transform:translateY(0.48px) skewY(0.05deg) scaleX(1.0324);-webkit-text-stroke:0.15px currentColor;">-</span>
<span class="t" style="top:394px;line-height:7px;font-size:6.4px;color:#1f72c2;left:926.20px;transform-origin:0 50%;transform:translateY(0.48px) skewY(0.05deg) scaleX(1.0324);-webkit-text-stroke:0.15px currentColor;">-</span>
<span class="t" style="top:394px;line-height:7px;font-size:6.4px;color:#1f72c2;left:972.09px;transform-origin:0 50%;transform:translateY(0.48px) skewY(0.05deg) scaleX(1.0324);-webkit-text-stroke:0.15px currentColor;">-</span>
<span class="t" style="top:394px;line-height:7px;font-size:6.4px;color:#1f72c2;left:1017.98px;transform-origin:0 50%;transform:translateY(0.48px) skewY(0.05deg) scaleX(1.0324);-webkit-text-stroke:0.15px currentColor;">-</span>
<span class="t" style="top:407px;line-height:7px;font-size:6.4px;color:#1f72c2;left:64.90px;transform-origin:0 50%;transform:translateY(0.31px) skewY(0.05deg) scaleX(0.9672);-webkit-text-stroke:0.15px currentColor;">COGS_Placeholder5</span>
<span class="t" style="top:407px;line-height:7px;font-size:6.4px;color:#1f72c2;left:283.74px;transform-origin:0 50%;transform:translateY(0.31px) skewY(0.05deg) scaleX(1.0324);-webkit-text-stroke:0.15px currentColor;">-</span>
<span class="t" style="top:407px;line-height:7px;font-size:6.4px;color:#1f72c2;left:329.63px;transform-origin:0 50%;transform:translateY(0.31px) skewY(0.05deg) scaleX(1.0324);-webkit-text-stroke:0.15px currentColor;">-</span>
<span class="t" style="top:407px;line-height:7px;font-size:6.4px;color:#1f72c2;left:375.52px;transform-origin:0 50%;transform:translateY(0.31px) skewY(0.05deg) scaleX(1.0324);-webkit-text-stroke:0.15px currentColor;">-</span>
<span class="t" style="top:407px;line-height:7px;font-size:6.4px;color:#1f72c2;left:421.41px;transform-origin:0 50%;transform:translateY(0.31px) skewY(0.05deg) scaleX(1.0324);-webkit-text-stroke:0.15px currentColor;">-</span>
<span class="t" style="top:407px;line-height:7px;font-size:6.4px;color:#1f72c2;left:467.30px;transform-origin:0 50%;transform:translateY(0.31px) skewY(0.05deg) scaleX(1.0324);-webkit-text-stroke:0.15px currentColor;">-</span>
<span class="t" style="top:407px;line-height:7px;font-size:6.4px;color:#1f72c2;left:513.19px;transform-origin:0 50%;transform:translateY(0.31px) skewY(0.05deg) scaleX(1.0324);-webkit-text-stroke:0.15px currentColor;">-</span>
<span class="t" style="top:407px;line-height:7px;font-size:6.4px;color:#1f72c2;left:559.08px;transform-origin:0 50%;transform:translateY(0.31px) skewY(0.05deg) scaleX(1.0324);-webkit-text-stroke:0.15px currentColor;">-</span>
<span class="t" style="top:407px;line-height:7px;font-size:6.4px;color:#1f72c2;left:604.97px;transform-origin:0 50%;transform:translateY(0.31px) skewY(0.05deg) scaleX(1.0324);-webkit-text-stroke:0.15px currentColor;">-</span>
<span class="t" style="top:407px;line-height:7px;font-size:6.4px;color:#1f72c2;left:650.86px;transform-origin:0 50%;transform:translateY(0.31px) skewY(0.05deg) scaleX(1.0324);-webkit-text-stroke:0.15px currentColor;">-</span>
<span class="t" style="top:407px;line-height:7px;font-size:6.4px;color:#1f72c2;left:696.75px;transform-origin:0 50%;transform:translateY(0.31px) skewY(0.05deg) scaleX(1.0324);-webkit-text-stroke:0.15px currentColor;">-</span>
<span class="t" style="top:407px;line-height:7px;font-size:6.4px;color:#1f72c2;left:742.64px;transform-origin:0 50%;transform:translateY(0.31px) skewY(0.05deg) scaleX(1.0324);-webkit-text-stroke:0.15px currentColor;">-</span>
<span class="t" style="top:407px;line-height:7px;font-size:6.4px;color:#1f72c2;left:788.53px;transform-origin:0 50%;transform:translateY(0.31px) skewY(0.05deg) scaleX(1.0324);-webkit-text-stroke:0.15px currentColor;">-</span>
<span class="t" style="top:407px;line-height:7px;font-size:6.4px;color:#1f72c2;left:834.42px;transform-origin:0 50%;transform:translateY(0.31px) skewY(0.05deg) scaleX(1.0324);-webkit-text-stroke:0.15px currentColor;">-</span>
<span class="t" style="top:407px;line-height:7px;font-size:6.4px;color:#1f72c2;left:880.31px;transform-origin:0 50%;transform:translateY(0.31px) skewY(0.05deg) scaleX(1.0324);-webkit-text-stroke:0.15px currentColor;">-</span>
<span class="t" style="top:407px;line-height:7px;font-size:6.4px;color:#1f72c2;left:926.20px;transform-origin:0 50%;transform:translateY(0.31px) skewY(0.05deg) scaleX(1.0324);-webkit-text-stroke:0.15px currentColor;">-</span>
<span class="t" style="top:407px;line-height:7px;font-size:6.4px;color:#1f72c2;left:972.09px;transform-origin:0 50%;transform:translateY(0.31px) skewY(0.05deg) scaleX(1.0324);-webkit-text-stroke:0.15px currentColor;">-</span>
<span class="t" style="top:407px;line-height:7px;font-size:6.4px;color:#1f72c2;left:1017.98px;transform-origin:0 50%;transform:translateY(0.31px) skewY(0.05deg) scaleX(1.0324);-webkit-text-stroke:0.15px currentColor;">-</span>
<span class="t" style="top:420px;line-height:7px;font-size:6.4px;color:#1f6fc0;font-weight:bold;left:64.90px;transform-origin:0 50%;transform:translateY(0.14px) skewY(0.05deg) scaleX(1.0385);">Total COGS</span>
<span class="t" style="top:420px;line-height:7px;font-size:6.4px;color:#1f6fc0;font-weight:bold;right:728.36px;transform-origin:100% 50%;transform:translateY(0.14px) skewY(0.05deg) scaleX(1.0434);">(11,775)</span>
<span class="t" style="top:420px;line-height:7px;font-size:6.4px;color:#1f6fc0;font-weight:bold;right:682.47px;transform-origin:100% 50%;transform:translateY(0.14px) skewY(0.05deg) scaleX(1.0434);">(11,775)</span>
<span class="t" style="top:420px;line-height:7px;font-size:6.4px;color:#1f6fc0;font-weight:bold;right:636.58px;transform-origin:100% 50%;transform:translateY(0.14px) skewY(0.05deg) scaleX(1.0434);">(11,775)</span>
<span class="t" style="top:420px;line-height:7px;font-size:6.4px;color:#1f6fc0;font-weight:bold;right:590.69px;transform-origin:100% 50%;transform:translateY(0.14px) skewY(0.05deg) scaleX(1.0434);">(11,775)</span>
<span class="t" style="top:420px;line-height:7px;font-size:6.4px;color:#1f6fc0;font-weight:bold;right:544.80px;transform-origin:100% 50%;transform:translateY(0.14px) skewY(0.05deg) scaleX(1.0434);">(11,775)</span>
<span class="t" style="top:420px;line-height:7px;font-size:6.4px;color:#1f6fc0;font-weight:bold;right:498.91px;transform-origin:100% 50%;transform:translateY(0.14px) skewY(0.05deg) scaleX(1.0434);">(11,775)</span>
<span class="t" style="top:420px;line-height:7px;font-size:6.4px;color:#1f6fc0;font-weight:bold;right:453.02px;transform-origin:100% 50%;transform:translateY(0.14px) skewY(0.05deg) scaleX(1.0434);">(11,775)</span>
<span class="t" style="top:420px;line-height:7px;font-size:6.4px;color:#1f6fc0;font-weight:bold;right:407.13px;transform-origin:100% 50%;transform:translateY(0.14px) skewY(0.05deg) scaleX(1.0434);">(11,775)</span>
<span class="t" style="top:420px;line-height:7px;font-size:6.4px;color:#1f6fc0;font-weight:bold;right:361.24px;transform-origin:100% 50%;transform:translateY(0.14px) skewY(0.05deg) scaleX(1.0434);">(11,775)</span>
<span class="t" style="top:420px;line-height:7px;font-size:6.4px;color:#1f6fc0;font-weight:bold;right:315.35px;transform-origin:100% 50%;transform:translateY(0.14px) skewY(0.05deg) scaleX(1.0434);">(11,775)</span>
<span class="t" style="top:420px;line-height:7px;font-size:6.4px;color:#1f6fc0;font-weight:bold;right:269.46px;transform-origin:100% 50%;transform:translateY(0.14px) skewY(0.05deg) scaleX(1.0434);">(11,775)</span>
<span class="t" style="top:420px;line-height:7px;font-size:6.4px;color:#1f6fc0;font-weight:bold;right:223.57px;transform-origin:100% 50%;transform:translateY(0.14px) skewY(0.05deg) scaleX(1.0434);">(11,775)</span>
<span class="t" style="top:420px;line-height:7px;font-size:6.4px;color:#1f6fc0;font-weight:bold;right:177.68px;transform-origin:100% 50%;transform:translateY(0.14px) skewY(0.05deg) scaleX(1.0279);">(12,963)</span>
<span class="t" style="top:420px;line-height:7px;font-size:6.4px;color:#1f6fc0;font-weight:bold;right:131.79px;transform-origin:100% 50%;transform:translateY(0.14px) skewY(0.05deg) scaleX(1.0279);">(12,963)</span>
<span class="t" style="top:420px;line-height:7px;font-size:6.4px;color:#1f6fc0;font-weight:bold;right:85.90px;transform-origin:100% 50%;transform:translateY(0.14px) skewY(0.05deg) scaleX(1.0279);">(12,963)</span>
<span class="t" style="top:420px;line-height:7px;font-size:6.4px;color:#1f6fc0;font-weight:bold;right:40.01px;transform-origin:100% 50%;transform:translateY(0.14px) skewY(0.05deg) scaleX(1.0279);">(12,963)</span>
<span class="t" style="top:420px;line-height:7px;font-size:6.4px;color:#1f6fc0;font-weight:bold;right:-5.88px;transform-origin:100% 50%;transform:translateY(0.14px) skewY(0.05deg) scaleX(1.0279);">(12,963)</span>
<div style="left:0.00px;top:572.80px;width:1024.00px;height:21.80px;background:#e5e8ec;"></div>
<div style="left:1010.90px;top:64.30px;width:13.10px;height:508.50px;background:#ececee;"></div>
<div style="left:1010.90px;top:52.60px;width:21.10px;height:521.40px;background:#f5f5f5;border-radius:6px;"></div>
<div style="left:1015.10px;top:63.40px;width:5.80px;height:488.90px;background:#707070;border-radius:3px;"></div>
<svg style="left:1011px;top:52px" width="13" height="12" viewBox="0 0 13 12"><path d="M3.9 7.9 L9.9 7.9 L6.9 3.8 Z" fill="#777"/></svg>
<svg style="left:1011px;top:562px" width="13" height="12" viewBox="0 0 13 12"><path d="M3.9 5.0 L9.9 5.0 L6.9 8.9 Z" fill="#777"/></svg>
<div style="left:0.00px;top:594.60px;width:1024.00px;height:12.40px;background:#f3f3f3;"></div>
<svg style="left:8px;top:8px;" width="16" height="16" viewBox="0 0 16 16"><path d="M5.6 2.1H13A1 1 0 0 1 14 3.1V12.8A1 1 0 0 1 13 13.8H5.6L4.4 12.6V3.3Z" fill="#fff" fill-opacity="0.58"/><path d="M9.2 5.6H14M9.2 8.2H14" stroke="#fff" stroke-width="0.8" stroke-opacity="0.7" fill="none"/><rect x="9.9" y="3.65" width="2.3" height="1.3" rx="0.5" fill="#107c41" fill-opacity="0.8"/><rect x="9.9" y="6.25" width="2.3" height="1.3" rx="0.5" fill="#107c41" fill-opacity="0.8"/><rect x="9.9" y="8.85" width="2.3" height="1.3" rx="0.5" fill="#107c41" fill-opacity="0.8"/><rect x="2.8" y="5.1" width="6.2" height="5.8" rx="0.5" fill="#fff"/><path d="M4.4 6.3L7.4 9.7M7.4 6.3L4.4 9.7" stroke="#107c41" stroke-width="0.95" fill="none"/></svg>
<svg style="left:30px;top:8px;" width="16" height="16" viewBox="0 0 16 16"><path d="M2.4 3.2H11.6L12.7 4.3V12.8H2.4Z" fill="none" stroke="#fff" stroke-width="0.8"/><path d="M5 3.2V6.2H10.4V3.2M5.4 12.8V9.2H10V12.8" fill="none" stroke="#fff" stroke-width="0.8"/></svg>
<svg style="left:48px;top:8px;" width="16" height="16" viewBox="0 0 16 16"><path d="M3.3 2.8V7.1H7.6" fill="none" stroke="#fff" stroke-width="0.95"/><path d="M3.5 6.9C5.2 3.6 8.6 2.2 11 3.6C13.2 4.9 13.3 7.2 11.6 8.9L7 13.2" fill="none" stroke="#fff" stroke-width="0.95"/></svg>
<svg style="left:64px;top:12px;" width="8" height="8" viewBox="0 0 8 8"><path d="M1.8 3L3.6 4.7L5.4 3" fill="none" stroke="#fff" stroke-width="0.9"/></svg>
<svg style="left:74px;top:8px;" width="16" height="16" viewBox="0 0 16 16"><g transform="translate(16,0) scale(-1,1)" opacity="0.42"><path d="M3.3 2.8V7.1H7.6" fill="none" stroke="#fff" stroke-width="0.95"/><path d="M3.5 6.9C5.2 3.6 8.6 2.2 11 3.6C13.2 4.9 13.3 7.2 11.6 8.9L7 13.2" fill="none" stroke="#fff" stroke-width="0.95"/></g></svg>
<svg style="left:89.6px;top:12px;" width="8" height="8" viewBox="0 0 8 8"><path d="M1.8 3L3.6 4.7L5.4 3" fill="none" stroke="#fff" stroke-width="0.9" opacity="0.42"/></svg>
<svg style="left:102px;top:10px;" width="12" height="12" viewBox="0 0 12 12"><path d="M2.5 4.2H7.7" stroke="#fff" stroke-width="0.9"/><path d="M3.4 6.6L5.1 8.3L6.8 6.6" fill="none" stroke="#fff" stroke-width="0.9"/></svg>
<svg style="left:402px;top:9px;" width="14" height="14" viewBox="0 0 14 14"><circle cx="8" cy="5.4" r="2.7" fill="none" stroke="#2d7a52" stroke-width="0.9"/><path d="M6.1 7.4L2.4 11.3" stroke="#2d7a52" stroke-width="0.9"/></svg>
<svg style="left:938px;top:10px;" width="12" height="12" viewBox="0 0 12 12"><path d="M3 5.5H10" stroke="#fff" stroke-width="0.8"/></svg>
<svg style="left:970px;top:10px;" width="12" height="12" viewBox="0 0 12 12"><rect x="2.9" y="4.0" width="5.4" height="5.4" rx="1.1" fill="none" stroke="#fff" stroke-width="0.75"/><path d="M4.6 2.6H8.4A1.4 1.4 0 0 1 9.8 4V7.8" fill="none" stroke="#fff" stroke-width="0.75"/></svg>
<svg style="left:1002px;top:10px;" width="12" height="12" viewBox="0 0 12 12"><path d="M3.1 2.6L9.9 9.5M9.9 2.6L3.1 9.5" stroke="#fff" stroke-width="0.8"/></svg>
<svg style="left:970px;top:36px;" width="12" height="12" viewBox="0 0 12 12"><path d="M4.2 4.2H2.4V9.6H9.3V7.6" fill="none" stroke="#fff" stroke-width="0.85"/><path d="M4.3 7.6C4.6 5.4 6 4.3 7.6 4.2V2.4L10 4.9L7.6 7.2V5.6C6.2 5.6 5.1 6.3 4.3 7.6Z" fill="none" stroke="#fff" stroke-width="0.8" stroke-linejoin="round"/></svg>
<svg style="left:1008px;top:38px;" width="8" height="8" viewBox="0 0 8 8"><path d="M2 3.7L3.9 5.4L5.8 3.7" fill="none" stroke="#fff" stroke-width="0.9"/></svg>
<svg style="left:14px;top:578px;" width="10" height="12" viewBox="0 0 10 12"><path d="M6.3 2.3L3 5.6L6.3 8.9" fill="none" stroke="#555" stroke-width="0.9"/></svg>
<svg style="left:36px;top:578px;" width="10" height="12" viewBox="0 0 10 12"><path d="M3 2.3L6.3 5.6L3 8.9" fill="none" stroke="#555" stroke-width="0.9"/></svg>
<svg style="left:57px;top:580px;" width="10" height="6" viewBox="0 0 10 6"><circle cx="1.9" cy="3.3" r="0.85" fill="#333"/><circle cx="4.3" cy="3.3" r="0.85" fill="#333"/><circle cx="6.7" cy="3.3" r="0.85" fill="#333"/></svg>
<span class="t" style="top:578px;line-height:11px;font-size:9.8px;color:#444444;left:80.50px;transform-origin:0 50%;transform:translateY(0.20px) skewY(0.05deg) scaleX(0.8647);">CF 2029</span>
<span class="t" style="top:578px;line-height:11px;font-size:9.8px;color:#444444;left:131.80px;transform-origin:0 50%;transform:translateY(0.20px) skewY(0.05deg) scaleX(0.8645);">BS 2029</span>
<span class="t" style="top:578px;line-height:11px;font-size:9.8px;color:#444444;left:183.30px;transform-origin:0 50%;transform:translateY(0.20px) skewY(0.05deg) scaleX(0.9239);">Statements Summary 2029</span>
<span class="t" style="top:578px;line-height:11px;font-size:9.8px;color:#444444;left:313.00px;transform-origin:0 50%;transform:translateY(0.20px) skewY(0.05deg) scaleX(0.8983);">Sales Summary Charts</span>
<span class="t" style="top:578px;line-height:11px;font-size:9.8px;color:#444444;left:423.50px;transform-origin:0 50%;transform:translateY(0.20px) skewY(0.05deg) scaleX(0.9122);">Key Metrics Charts</span>
<span class="t" style="top:578px;line-height:11px;font-size:9.8px;color:#444444;left:517.50px;transform-origin:0 50%;transform:translateY(0.20px) skewY(0.05deg) scaleX(0.9112);">Charts</span>
<span class="t" style="top:578px;line-height:11px;font-size:9.8px;color:#444444;left:561.30px;transform-origin:0 50%;transform:translateY(0.20px) skewY(0.05deg) scaleX(0.8006);">BEA</span>
<div style="left:122.10px;top:577.00px;width:0.80px;height:13.50px;background:#d0d3d8;"></div>
<div style="left:172.90px;top:577.00px;width:0.80px;height:13.50px;background:#d0d3d8;"></div>
<div style="left:303.10px;top:577.00px;width:0.80px;height:13.50px;background:#d0d3d8;"></div>
<div style="left:413.10px;top:577.00px;width:0.80px;height:13.50px;background:#d0d3d8;"></div>
<div style="left:507.90px;top:577.00px;width:0.80px;height:13.50px;background:#d0d3d8;"></div>
<div style="left:552.10px;top:577.00px;width:0.80px;height:13.50px;background:#d0d3d8;"></div>
<div style="left:585.40px;top:577.00px;width:0.80px;height:13.50px;background:#d0d3d8;"></div>
<div style="left:630.10px;top:577.00px;width:0.80px;height:13.50px;background:#d0d3d8;"></div>
<div style="left:685.10px;top:577.00px;width:0.80px;height:13.50px;background:#d0d3d8;"></div>
<div style="left:783.40px;top:577.00px;width:0.80px;height:13.50px;background:#d0d3d8;"></div>
<div style="left:889.10px;top:577.00px;width:0.80px;height:13.50px;background:#d0d3d8;"></div>
<div style="left:588.00px;top:575.50px;width:40.00px;height:15.80px;background:#fdfd96;border-radius:2.5px;"></div>
<span class="t" style="top:578px;line-height:11px;font-size:9.8px;color:#3a3a2a;left:594.50px;transform-origin:0 50%;transform:translateY(0.20px) skewY(0.05deg) scaleX(0.8277);">CAPEX</span>
<div style="left:633.30px;top:575.50px;width:49.20px;height:15.80px;background:#fdfd96;border-radius:2.5px;"></div>
<span class="t" style="top:578px;line-height:11px;font-size:9.8px;color:#3a3a2a;left:639.50px;transform-origin:0 50%;transform:translateY(0.20px) skewY(0.05deg) scaleX(0.8667);">Expenses</span>
<div style="left:688.50px;top:572.60px;width:91.90px;height:18.60px;background:#fdfdf3;border-radius:0 0 3px 3px;"></div>
<span class="t" style="top:576px;line-height:11px;font-size:9.4px;color:#262626;left:694.00px;transform-origin:0 50%;transform:translateY(0.00px) skewY(0.05deg) scaleX(0.9715);-webkit-text-stroke:0.3px #262626;">COGS Assumptions</span>
<div style="left:694.00px;top:588.50px;width:81.20px;height:1.30px;background:#107c41;"></div>
<div style="left:786.10px;top:575.50px;width:100.10px;height:15.80px;background:#fdfd96;border-radius:2.5px;"></div>
<span class="t" style="top:578px;line-height:11px;font-size:9.8px;color:#3a3a2a;left:792.70px;transform-origin:0 50%;transform:translateY(0.20px) skewY(0.05deg) scaleX(0.9212);">Salaries Assumptions</span>
<div style="left:898.4px;top:574px;width:2.4px;height:20px;overflow:hidden"><span class="t" style="left:0;top:4px;line-height:11px;font-size:9.8px;color:#444">Cash</span></div>
<svg style="left:907px;top:580px;" width="10" height="6" viewBox="0 0 10 6"><circle cx="2.2" cy="3.3" r="0.85" fill="#333"/><circle cx="4.7" cy="3.3" r="0.85" fill="#333"/><circle cx="7.2" cy="3.3" r="0.85" fill="#333"/></svg>
<svg style="left:927px;top:577px;" width="12" height="12" viewBox="0 0 12 12"><path d="M2 6.3H9.8M5.9 2.4V10.2" stroke="#444" stroke-width="0.9"/></svg>
<svg style="left:951px;top:577px;" width="6" height="12" viewBox="0 0 6 12"><circle cx="3.3" cy="3.6" r="0.75" fill="#444"/><circle cx="3.3" cy="6.4" r="0.75" fill="#444"/><circle cx="3.3" cy="9.2" r="0.75" fill="#444"/></svg>
<div style="left:965.60px;top:577.80px;width:46.10px;height:11.00px;background:#f3f4f6;border-radius:5.5px;"></div>
<svg style="left:967px;top:579px;" width="8" height="9" viewBox="0 0 8 9"><path d="M6 1.7V7.1L1.8 4.4Z" fill="#555"/></svg>
<div style="left:976.80px;top:580.60px;width:11.20px;height:5.60px;background:#6a6a6a;border-radius:2.8px;"></div>
<svg style="left:1002px;top:579px;" width="8" height="9" viewBox="0 0 8 9"><path d="M2.4 1.7V7.1L6.6 4.4Z" fill="#555"/></svg>
<span class="t" style="top:598px;line-height:7px;font-size:6.9px;color:#6a6a6a;left:8.20px;transform-origin:0 50%;transform:translateY(0.20px) skewY(0.05deg) scaleX(0.9376);">Ready</span>
<svg style="left:40px;top:596px;" width="11" height="11" viewBox="0 0 11 11"><rect x="0.3" y="1.3" width="9.4" height="2.1" fill="#555"/><path d="M0.7 3V9H3.6" fill="none" stroke="#555" stroke-width="0.8"/><path d="M9.3 3V4.6" stroke="#555" stroke-width="0.8"/><circle cx="6.6" cy="7.2" r="2.1" fill="none" stroke="#555" stroke-width="0.75"/><circle cx="6.6" cy="7.2" r="0.9" fill="#333"/><path d="M2 5.3H3.6" stroke="#555" stroke-width="0.7"/></svg>
<svg style="left:60px;top:596px;" width="12" height="11" viewBox="0 0 12 11"><circle cx="5.6" cy="2.3" r="1.1" fill="none" stroke="#444" stroke-width="0.7"/><circle cx="2.3" cy="3.5" r="0.8" fill="none" stroke="#444" stroke-width="0.65"/><circle cx="9" cy="3.5" r="0.8" fill="none" stroke="#444" stroke-width="0.65"/><path d="M3.1 4.1L5.6 4.7L8.2 4.1M5.6 3.5V7.4M5.6 7.4L4.2 10.6M5.6 7.4L6.4 8.6" stroke="#444" stroke-width="0.75" fill="none"/><path d="M7.2 7.8L10 10.6M10 7.8L7.2 10.6" stroke="#555" stroke-width="0.7" fill="none"/><path d="M2.4 8.2L4 10.4" stroke="#666" stroke-width="0.6" fill="none"/></svg>
<span class="t" style="top:598px;line-height:7px;font-size:7.0px;color:#333333;font-weight:bold;left:73.40px;transform-origin:0 50%;transform:translateY(0.40px) skewY(0.05deg) scaleX(0.9637);">Accessibility: Investigate</span>
<div style="left:826.40px;top:594.60px;width:26.60px;height:12.40px;background:#dedede;"></div>
<svg style="left:834px;top:596px;" width="11" height="11" viewBox="0 0 11 11"><rect x="1.3" y="1.4" width="8" height="8" fill="none" stroke="#3f3f3f" stroke-width="0.95"/><path d="M1.3 4.1H9.3M1.3 6.8H9.3M4 1.4V9.4M6.7 1.4V9.4" stroke="#3f3f3f" stroke-width="0.9"/></svg>
<svg style="left:860px;top:596px;" width="12" height="11" viewBox="0 0 12 11"><rect x="1.5" y="1.4" width="9" height="8.2" fill="none" stroke="#4a4a4a" stroke-width="0.95"/><rect x="3.5" y="3.2" width="5" height="4.8" fill="none" stroke="#4a4a4a" stroke-width="0.85"/><path d="M5.3 4.4V6.8M6.7 4.4V6.8" stroke="#4a4a4a" stroke-width="0.6"/></svg>
<svg style="left:887px;top:596px;" width="12" height="11" viewBox="0 0 12 11"><rect x="1.6" y="1.4" width="8.6" height="8.2" fill="none" stroke="#4a4a4a" stroke-width="0.95"/><path d="M4.2 1.4V5.7H8.4V3.6M6.3 1.4V5.7" stroke="#4a4a4a" stroke-width="0.8" fill="none"/></svg>
<svg style="left:908px;top:597px;" width="8" height="8" viewBox="0 0 8 8"><path d="M1.8 4.4H6.2" stroke="#555" stroke-width="0.8"/></svg>
<div style="left:918.40px;top:601.00px;width:66.60px;height:0.80px;background:#a6a6a6;"></div>
<div style="left:950.30px;top:597.60px;width:2.90px;height:7.70px;background:#555555;border-radius:0.8px;"></div>
<svg style="left:986px;top:597px;" width="9" height="9" viewBox="0 0 9 9"><path d="M1.8 4.4H7.4M4.6 1.6V7.2" stroke="#555" stroke-width="0.8"/></svg>
<span class="t" style="top:598px;line-height:7px;font-size:6.6px;color:#555555;left:1002.90px;transform-origin:0 50%;transform:translateY(0.50px) skewY(0.05deg) scaleX(0.9360);">100%</span>
</div></body></html>
